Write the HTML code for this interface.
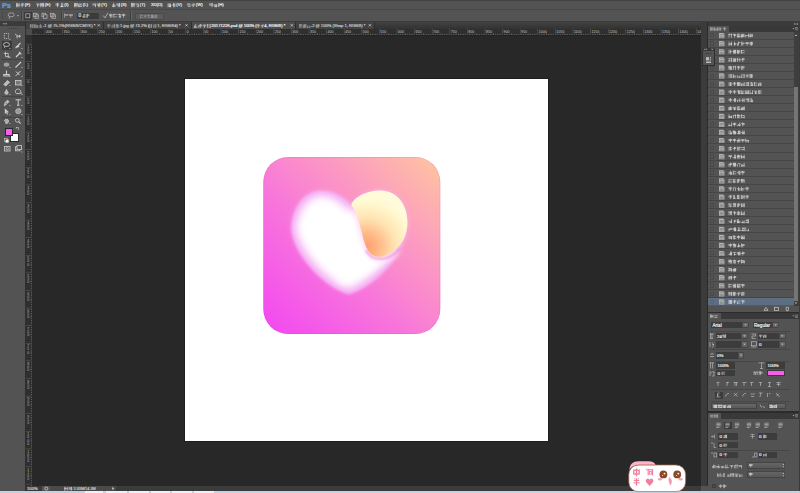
<!DOCTYPE html><html><head><meta charset="utf-8"><style>
html,body{margin:0;padding:0;}
body{width:800px;height:493px;overflow:hidden;position:relative;background:#282828;font-family:"Liberation Sans",sans-serif;}
div{position:absolute;box-sizing:border-box;}
.l{white-space:nowrap;line-height:1;-webkit-text-stroke:0.18px currentColor;}
svg{position:absolute;left:0;top:0;overflow:visible}
</style></head><body>
<div style="left:0px;top:0px;width:800px;height:10px;background:#535353;"></div>
<div style="left:0px;top:0px;width:800px;height:1px;background:#424242;"></div>
<div style="left:0px;top:9px;width:800px;height:1px;background:#484848;"></div>
<div class="l" style="left:2px;top:2.00px;font-size:7.6px;color:#58a2e2;font-weight:bold;letter-spacing:-0.2px">Ps</div>
<div class="l" style="left:24.8px;top:3.20px;font-size:4.3px;color:#f0f0f0;">(F)</div>
<div class="l" style="left:44.8px;top:3.20px;font-size:4.3px;color:#f0f0f0;">(E)</div>
<div class="l" style="left:64.3px;top:3.20px;font-size:4.3px;color:#f0f0f0;">(I)</div>
<div class="l" style="left:82.8px;top:3.20px;font-size:4.3px;color:#f0f0f0;">(L)</div>
<div class="l" style="left:101.3px;top:3.20px;font-size:4.3px;color:#f0f0f0;">(Y)</div>
<div class="l" style="left:120.8px;top:3.20px;font-size:4.3px;color:#f0f0f0;">(S)</div>
<div class="l" style="left:139.8px;top:3.20px;font-size:4.3px;color:#f0f0f0;">(T)</div>
<div class="l" style="left:176.3px;top:3.20px;font-size:4.3px;color:#f0f0f0;">(V)</div>
<div class="l" style="left:195.8px;top:3.20px;font-size:4.3px;color:#f0f0f0;">(W)</div>
<div class="l" style="left:217.8px;top:3.20px;font-size:4.3px;color:#f0f0f0;">(H)</div>
<div class="l" style="left:151px;top:3.20px;font-size:4.3px;color:#f0f0f0;">3D(D)</div>
<div style="left:0px;top:10px;width:800px;height:11.5px;background:#535353;"></div>
<div style="left:0px;top:21px;width:800px;height:1px;background:#3c3c3c;"></div>
<div style="left:2px;top:12px;width:1px;height:1px;background:#3e3e3e;"></div>
<div style="left:2px;top:14px;width:1px;height:1px;background:#3e3e3e;"></div>
<div style="left:2px;top:16px;width:1px;height:1px;background:#3e3e3e;"></div>
<div style="left:2px;top:18px;width:1px;height:1px;background:#3e3e3e;"></div>
<div style="left:21px;top:11px;width:1px;height:10px;background:#404040;"></div>
<div style="left:22px;top:11px;width:1px;height:10px;background:#626262;"></div>
<div style="left:24px;top:12px;width:7.5px;height:7.5px;background:#3a3a3a;"></div>
<div style="left:61px;top:11px;width:1px;height:10px;background:#404040;"></div>
<div style="left:62px;top:11px;width:1px;height:10px;background:#626262;"></div>
<div style="left:76.7px;top:13px;width:22.5px;height:6.2px;background:#3b3b3b;"></div>
<div class="l" style="left:78.5px;top:14.40px;font-size:4.6px;color:#e0e0e0;">0</div>
<div style="left:130px;top:11px;width:1px;height:10px;background:#404040;"></div>
<div style="left:131px;top:11px;width:1px;height:10px;background:#626262;"></div>
<div style="left:134.5px;top:13px;width:29.2px;height:6.5px;background:#5c5c5c;border:0.5px solid #4a4a4a"></div>
<svg width="800" height="30">
<g fill="none" stroke="#b4b4b4" stroke-width="0.75">
<ellipse cx="11.2" cy="14.8" rx="3" ry="2"/><path d="M9.5,16.6 C9,17.5 9.2,18.5 10,18.8"/>
<path d="M17,15.2 L19,15.2 L18,16.4 Z" fill="#cfcfcf" stroke="none"/>
<rect x="25.8" y="13.8" width="4" height="4"/>
<rect x="33.5" y="13.3" width="3.5" height="3.5"/><rect x="35" y="14.8" width="3.5" height="3.5"/>
<rect x="42" y="13.3" width="3.5" height="3.5"/><rect x="43.5" y="14.8" width="3.5" height="3.5" fill="#535353"/>
<rect x="50.5" y="13.3" width="3.5" height="3.5"/><rect x="52" y="14.8" width="3.5" height="3.5"/>
<path d="M103.2,15.6 L105,17.8 L108,12.8" stroke-width="0.9"/>
</g></svg>
<div style="left:0px;top:22px;width:25px;height:469px;background:#535353;"></div>
<div style="left:0px;top:22px;width:25px;height:3.6px;background:#3b3b3b;"></div>
<div style="left:25px;top:22px;width:1px;height:469px;background:#2e2e2e;"></div>
<div style="left:9px;top:28px;width:1.2px;height:0.9px;background:#3a3a3a;"></div>
<div style="left:11px;top:28px;width:1.2px;height:0.9px;background:#3a3a3a;"></div>
<div style="left:13px;top:28px;width:1.2px;height:0.9px;background:#3a3a3a;"></div>
<div style="left:15px;top:28px;width:1.2px;height:0.9px;background:#3a3a3a;"></div>
<div style="left:17px;top:28px;width:1.2px;height:0.9px;background:#3a3a3a;"></div>
<div style="left:1.5px;top:41px;width:10px;height:8.5px;background:#3a3a3a;"></div>
<div style="left:2px;top:58.8px;width:21px;height:0.8px;background:#444444;"></div>
<div style="left:2px;top:96px;width:21px;height:0.8px;background:#444444;"></div>
<div style="left:2px;top:116.5px;width:21px;height:0.8px;background:#444444;"></div>
<div style="left:4.9px;top:128.1px;width:8.2px;height:7.9px;background:#f55ee8;border:0.5px solid #2a2a2a"></div>
<div style="left:10px;top:133.3px;width:8.9px;height:8.5px;background:#ffffff;border:0.5px solid #2a2a2a"></div>
<div style="left:4.9px;top:128.1px;width:8.2px;height:7.9px;background:#f55ee8;border:0.5px solid #2a2a2a"></div>
<svg width="30" height="160">
<g fill="none" stroke="#cfcfcf" stroke-width="0.8">
<path d="M2.5,23.8 L4.5,22.8 L4.5,24.8 Z M4.8,23.8 L6.8,22.8 L6.8,24.8 Z" fill="#9a9a9a" stroke="none"/>
<rect x="4.3" y="33.5" width="4.3" height="5" stroke-dasharray="1 0.8"/>
<path d="M15,34 L18,36 L16.5,36.5 L17.5,38.5 M18,36.2 L21,36.2 M19.5,34.8 L19.5,37.6"/>
<ellipse cx="6.5" cy="44.5" rx="3" ry="2"/><path d="M4.8,46.2 C4.2,47 4.5,48 5.2,48.3"/>
<path d="M15.5,48 L20.5,43 M16,46.5 C17,47.5 18.5,47 19,46" stroke-width="1.1"/>
<path d="M5.5,51.8 L5.5,56.6 L9.6,56.6 M3.8,53.4 L8.2,53.4 L8.2,58"/>
<path d="M16,57 L20,53 M19,52 L21.3,54.3" stroke-width="1.2"/>
<ellipse cx="6.5" cy="64.6" rx="2.8" ry="2.2" fill="#9d9d9d" stroke="none"/>
<path d="M15.5,67.5 L21,62" stroke-width="1.1"/>
<path d="M6.5,70.5 L6.5,74 M3.8,74.5 L9.2,74.5 L9.2,76 L3.8,76 Z" stroke-width="1.1"/>
<path d="M15.5,76 L20.5,71 M16,71.5 L19.5,75" stroke-width="1"/>
<path d="M3.8,84.5 L7.5,80.5 L9.5,82.3 L5.8,86 Z" fill="#bbbbbb"/>
<rect x="15.5" y="80.5" width="5.5" height="4.5" fill="#777"/>
<path d="M6.5,88.8 L8.4,92.2 A2,2 0 1 1 4.6,92.2 Z" fill="#bbbbbb" stroke="none"/>
<path d="M15.6,92.6 A2.6,2.6 0 1 1 20.6,91.5 L21.4,93.2 L16.5,93.6 Z" stroke-width="0.9"/>
<path d="M4,106 L5,102.5 L7.5,100 L9.2,101.7 L6.7,104.2 Z" fill="#b8b8b8" stroke-width="0.5"/><circle cx="6.3" cy="103.3" r="0.5" fill="#535353" stroke="none"/>
<path d="M15.5,99.8 L21,99.8 M18.2,99.8 L18.2,105.2 M17,105.2 L19.4,105.2" stroke-width="1"/>
<path d="M4.8,108.3 L4.8,114.2 L6.2,112.8 L7.3,114.8 L8.2,114.3 L7.2,112.4 L9,112.2 Z" fill="#c8c8c8" stroke="none"/>
<path d="M15.8,110.2 C16.5,108.2 18.5,109.2 19.2,108.3 C20.5,108.6 21.5,110.8 20.8,112.2 C20,114 17,114.2 16.2,113 C15.6,112.2 15.6,111 15.8,110.2 Z" fill="#9a9a9a" stroke="#cfcfcf" stroke-width="0.6"/>
<path d="M4.5,121 C4.5,118.5 8.5,118.5 8.5,121 C8.5,123.5 6.5,124 5.2,123" fill="#aaaaaa"/>
<circle cx="17.3" cy="120.3" r="1.9"/><path d="M18.7,121.7 L20.6,123.6" stroke-width="1.1"/>
<path d="M16.4,127.5 L18.4,127.5 L18.4,130 M15.8,128.2 L16.6,127.3 L16.6,128.6" stroke-width="0.6"/>
<rect x="4.6" y="138.6" width="2.6" height="2.6" fill="#333" stroke-width="0.6"/><rect x="5.8" y="139.8" width="2.6" height="2.6" fill="#fff" stroke-width="0.6"/>
<rect x="4.5" y="146.5" width="5.5" height="4.5"/><circle cx="7.25" cy="148.75" r="1.2"/>
<rect x="15.5" y="146.8" width="4.5" height="4" /><rect x="17" y="145.6" width="4.5" height="4" fill="#535353"/>
</g>
<g fill="#d0d0d0">
<rect x="9.5" y="39" width="0.9" height="0.9"/><rect x="9.5" y="48" width="0.9" height="0.9"/><rect x="9.5" y="57" width="0.9" height="0.9"/>
<rect x="9.5" y="67" width="0.9" height="0.9"/><rect x="9.5" y="76" width="0.9" height="0.9"/><rect x="9.5" y="85" width="0.9" height="0.9"/><rect x="9.5" y="94" width="0.9" height="0.9"/>
<rect x="9.5" y="105" width="0.9" height="0.9"/><rect x="9.5" y="114" width="0.9" height="0.9"/><rect x="9.5" y="123" width="0.9" height="0.9"/>
<rect x="21.5" y="48" width="0.9" height="0.9"/><rect x="21.5" y="57" width="0.9" height="0.9"/><rect x="21.5" y="67" width="0.9" height="0.9"/>
<rect x="21.5" y="76" width="0.9" height="0.9"/><rect x="21.5" y="85" width="0.9" height="0.9"/><rect x="21.5" y="94" width="0.9" height="0.9"/>
<rect x="21.5" y="105" width="0.9" height="0.9"/><rect x="21.5" y="114" width="0.9" height="0.9"/><rect x="21.5" y="151.5" width="0.9" height="0.9"/>
</g></svg>
<div style="left:26px;top:22px;width:675px;height:6.6px;background:#393939;background:linear-gradient(#424242,#323232)"></div>
<div style="left:26px;top:22px;width:77px;height:6.6px;background:#424242;"></div>
<div style="left:103px;top:22px;width:0.8px;height:6.6px;background:#2e2e2e;"></div>
<div style="left:103.8px;top:22px;width:87px;height:6.6px;background:#424242;"></div>
<div style="left:190.8px;top:22px;width:0.8px;height:6.6px;background:#2e2e2e;"></div>
<div style="left:191.6px;top:22px;width:103.4px;height:6.6px;background:#4d4d4d;"></div>
<div style="left:295px;top:22px;width:0.8px;height:6.6px;background:#2e2e2e;"></div>
<div style="left:295.8px;top:22px;width:78px;height:6.6px;background:#424242;"></div>
<div style="left:373.8px;top:22px;width:0.8px;height:6.6px;background:#2e2e2e;"></div>
<div class="l" style="left:43px;top:24.00px;font-size:4.1px;color:#c8c8c8;">-1 @ 75.1%(RGB/8/CMYK) *</div>
<div class="l" style="left:120px;top:24.00px;font-size:4.1px;color:#c8c8c8;">1.jpg @ 73.2% (</div>
<div class="l" style="left:157.3px;top:24.00px;font-size:4.1px;color:#c8c8c8;"> 1, RGB/8#) *</div>
<div class="l" style="left:211.3px;top:24.00px;font-size:4.1px;color:#f4f4f4;">20171228.psd @ 100% (</div>
<div class="l" style="left:264.3px;top:24.00px;font-size:4.1px;color:#f4f4f4;"> 4, RGB/8) *</div>
<div class="l" style="left:310.8px;top:24.00px;font-size:4.1px;color:#c8c8c8;">-2 @ 100% (Shap 1, RGB/8) *</div>
<svg width="800" height="40"><g stroke="#d8d8d8" stroke-width="0.7"><path d="M97.7,24.2 L99.89999999999999,26.4 M99.89999999999999,24.2 L97.7,26.4"/><path d="M185.4,24.2 L187.6,26.4 M187.6,24.2 L185.4,26.4"/><path d="M290.7,24.2 L292.90000000000003,26.4 M292.90000000000003,24.2 L290.7,26.4"/><path d="M368.79999999999995,24.2 L371.0,26.4 M371.0,24.2 L368.79999999999995,26.4"/></g></svg>
<div style="left:26px;top:28.6px;width:675px;height:6.4px;background:#2f2f2f;"></div>
<div style="left:26px;top:28.6px;width:6px;height:457.4px;background:#2f2f2f;"></div>
<div style="left:26px;top:28.6px;width:6px;height:6.4px;background:#4d4d4d;"></div>
<div style="left:32px;top:34.5px;width:669px;height:0.5px;background:#222;"></div>
<svg width="800" height="493"><g fill="#8e8e8e"><rect x="32.38" y="34.10" width="0.5" height="0.9"/><rect x="34.14" y="34.10" width="0.5" height="0.9"/><rect x="35.90" y="33.40" width="0.5" height="1.6"/><rect x="37.66" y="34.10" width="0.5" height="0.9"/><rect x="39.42" y="34.10" width="0.5" height="0.9"/><rect x="41.18" y="34.10" width="0.5" height="0.9"/><rect x="42.94" y="34.10" width="0.5" height="0.9"/><rect x="44.70" y="28.6" width="0.6" height="6.4" fill="#5a5a5a"/><rect x="46.46" y="34.10" width="0.5" height="0.9"/><rect x="48.22" y="34.10" width="0.5" height="0.9"/><rect x="49.98" y="34.10" width="0.5" height="0.9"/><rect x="51.74" y="34.10" width="0.5" height="0.9"/><rect x="53.50" y="33.40" width="0.5" height="1.6"/><rect x="55.26" y="34.10" width="0.5" height="0.9"/><rect x="57.02" y="34.10" width="0.5" height="0.9"/><rect x="58.78" y="34.10" width="0.5" height="0.9"/><rect x="60.54" y="34.10" width="0.5" height="0.9"/><rect x="62.30" y="28.6" width="0.6" height="6.4" fill="#5a5a5a"/><rect x="64.06" y="34.10" width="0.5" height="0.9"/><rect x="65.82" y="34.10" width="0.5" height="0.9"/><rect x="67.58" y="34.10" width="0.5" height="0.9"/><rect x="69.34" y="34.10" width="0.5" height="0.9"/><rect x="71.10" y="33.40" width="0.5" height="1.6"/><rect x="72.86" y="34.10" width="0.5" height="0.9"/><rect x="74.62" y="34.10" width="0.5" height="0.9"/><rect x="76.38" y="34.10" width="0.5" height="0.9"/><rect x="78.14" y="34.10" width="0.5" height="0.9"/><rect x="79.90" y="28.6" width="0.6" height="6.4" fill="#5a5a5a"/><rect x="81.66" y="34.10" width="0.5" height="0.9"/><rect x="83.42" y="34.10" width="0.5" height="0.9"/><rect x="85.18" y="34.10" width="0.5" height="0.9"/><rect x="86.94" y="34.10" width="0.5" height="0.9"/><rect x="88.70" y="33.40" width="0.5" height="1.6"/><rect x="90.46" y="34.10" width="0.5" height="0.9"/><rect x="92.22" y="34.10" width="0.5" height="0.9"/><rect x="93.98" y="34.10" width="0.5" height="0.9"/><rect x="95.74" y="34.10" width="0.5" height="0.9"/><rect x="97.50" y="28.6" width="0.6" height="6.4" fill="#5a5a5a"/><rect x="99.26" y="34.10" width="0.5" height="0.9"/><rect x="101.02" y="34.10" width="0.5" height="0.9"/><rect x="102.78" y="34.10" width="0.5" height="0.9"/><rect x="104.54" y="34.10" width="0.5" height="0.9"/><rect x="106.30" y="33.40" width="0.5" height="1.6"/><rect x="108.06" y="34.10" width="0.5" height="0.9"/><rect x="109.82" y="34.10" width="0.5" height="0.9"/><rect x="111.58" y="34.10" width="0.5" height="0.9"/><rect x="113.34" y="34.10" width="0.5" height="0.9"/><rect x="115.10" y="28.6" width="0.6" height="6.4" fill="#5a5a5a"/><rect x="116.86" y="34.10" width="0.5" height="0.9"/><rect x="118.62" y="34.10" width="0.5" height="0.9"/><rect x="120.38" y="34.10" width="0.5" height="0.9"/><rect x="122.14" y="34.10" width="0.5" height="0.9"/><rect x="123.90" y="33.40" width="0.5" height="1.6"/><rect x="125.66" y="34.10" width="0.5" height="0.9"/><rect x="127.42" y="34.10" width="0.5" height="0.9"/><rect x="129.18" y="34.10" width="0.5" height="0.9"/><rect x="130.94" y="34.10" width="0.5" height="0.9"/><rect x="132.70" y="28.6" width="0.6" height="6.4" fill="#5a5a5a"/><rect x="134.46" y="34.10" width="0.5" height="0.9"/><rect x="136.22" y="34.10" width="0.5" height="0.9"/><rect x="137.98" y="34.10" width="0.5" height="0.9"/><rect x="139.74" y="34.10" width="0.5" height="0.9"/><rect x="141.50" y="33.40" width="0.5" height="1.6"/><rect x="143.26" y="34.10" width="0.5" height="0.9"/><rect x="145.02" y="34.10" width="0.5" height="0.9"/><rect x="146.78" y="34.10" width="0.5" height="0.9"/><rect x="148.54" y="34.10" width="0.5" height="0.9"/><rect x="150.30" y="28.6" width="0.6" height="6.4" fill="#5a5a5a"/><rect x="152.06" y="34.10" width="0.5" height="0.9"/><rect x="153.82" y="34.10" width="0.5" height="0.9"/><rect x="155.58" y="34.10" width="0.5" height="0.9"/><rect x="157.34" y="34.10" width="0.5" height="0.9"/><rect x="159.10" y="33.40" width="0.5" height="1.6"/><rect x="160.86" y="34.10" width="0.5" height="0.9"/><rect x="162.62" y="34.10" width="0.5" height="0.9"/><rect x="164.38" y="34.10" width="0.5" height="0.9"/><rect x="166.14" y="34.10" width="0.5" height="0.9"/><rect x="167.90" y="28.6" width="0.6" height="6.4" fill="#5a5a5a"/><rect x="169.66" y="34.10" width="0.5" height="0.9"/><rect x="171.42" y="34.10" width="0.5" height="0.9"/><rect x="173.18" y="34.10" width="0.5" height="0.9"/><rect x="174.94" y="34.10" width="0.5" height="0.9"/><rect x="176.70" y="33.40" width="0.5" height="1.6"/><rect x="178.46" y="34.10" width="0.5" height="0.9"/><rect x="180.22" y="34.10" width="0.5" height="0.9"/><rect x="181.98" y="34.10" width="0.5" height="0.9"/><rect x="183.74" y="34.10" width="0.5" height="0.9"/><rect x="185.50" y="28.6" width="0.6" height="6.4" fill="#5a5a5a"/><rect x="187.26" y="34.10" width="0.5" height="0.9"/><rect x="189.02" y="34.10" width="0.5" height="0.9"/><rect x="190.78" y="34.10" width="0.5" height="0.9"/><rect x="192.54" y="34.10" width="0.5" height="0.9"/><rect x="194.30" y="33.40" width="0.5" height="1.6"/><rect x="196.06" y="34.10" width="0.5" height="0.9"/><rect x="197.82" y="34.10" width="0.5" height="0.9"/><rect x="199.58" y="34.10" width="0.5" height="0.9"/><rect x="201.34" y="34.10" width="0.5" height="0.9"/><rect x="203.10" y="28.6" width="0.6" height="6.4" fill="#5a5a5a"/><rect x="204.86" y="34.10" width="0.5" height="0.9"/><rect x="206.62" y="34.10" width="0.5" height="0.9"/><rect x="208.38" y="34.10" width="0.5" height="0.9"/><rect x="210.14" y="34.10" width="0.5" height="0.9"/><rect x="211.90" y="33.40" width="0.5" height="1.6"/><rect x="213.66" y="34.10" width="0.5" height="0.9"/><rect x="215.42" y="34.10" width="0.5" height="0.9"/><rect x="217.18" y="34.10" width="0.5" height="0.9"/><rect x="218.94" y="34.10" width="0.5" height="0.9"/><rect x="220.70" y="28.6" width="0.6" height="6.4" fill="#5a5a5a"/><rect x="222.46" y="34.10" width="0.5" height="0.9"/><rect x="224.22" y="34.10" width="0.5" height="0.9"/><rect x="225.98" y="34.10" width="0.5" height="0.9"/><rect x="227.74" y="34.10" width="0.5" height="0.9"/><rect x="229.50" y="33.40" width="0.5" height="1.6"/><rect x="231.26" y="34.10" width="0.5" height="0.9"/><rect x="233.02" y="34.10" width="0.5" height="0.9"/><rect x="234.78" y="34.10" width="0.5" height="0.9"/><rect x="236.54" y="34.10" width="0.5" height="0.9"/><rect x="238.30" y="28.6" width="0.6" height="6.4" fill="#5a5a5a"/><rect x="240.06" y="34.10" width="0.5" height="0.9"/><rect x="241.82" y="34.10" width="0.5" height="0.9"/><rect x="243.58" y="34.10" width="0.5" height="0.9"/><rect x="245.34" y="34.10" width="0.5" height="0.9"/><rect x="247.10" y="33.40" width="0.5" height="1.6"/><rect x="248.86" y="34.10" width="0.5" height="0.9"/><rect x="250.62" y="34.10" width="0.5" height="0.9"/><rect x="252.38" y="34.10" width="0.5" height="0.9"/><rect x="254.14" y="34.10" width="0.5" height="0.9"/><rect x="255.90" y="28.6" width="0.6" height="6.4" fill="#5a5a5a"/><rect x="257.66" y="34.10" width="0.5" height="0.9"/><rect x="259.42" y="34.10" width="0.5" height="0.9"/><rect x="261.18" y="34.10" width="0.5" height="0.9"/><rect x="262.94" y="34.10" width="0.5" height="0.9"/><rect x="264.70" y="33.40" width="0.5" height="1.6"/><rect x="266.46" y="34.10" width="0.5" height="0.9"/><rect x="268.22" y="34.10" width="0.5" height="0.9"/><rect x="269.98" y="34.10" width="0.5" height="0.9"/><rect x="271.74" y="34.10" width="0.5" height="0.9"/><rect x="273.50" y="28.6" width="0.6" height="6.4" fill="#5a5a5a"/><rect x="275.26" y="34.10" width="0.5" height="0.9"/><rect x="277.02" y="34.10" width="0.5" height="0.9"/><rect x="278.78" y="34.10" width="0.5" height="0.9"/><rect x="280.54" y="34.10" width="0.5" height="0.9"/><rect x="282.30" y="33.40" width="0.5" height="1.6"/><rect x="284.06" y="34.10" width="0.5" height="0.9"/><rect x="285.82" y="34.10" width="0.5" height="0.9"/><rect x="287.58" y="34.10" width="0.5" height="0.9"/><rect x="289.34" y="34.10" width="0.5" height="0.9"/><rect x="291.10" y="28.6" width="0.6" height="6.4" fill="#5a5a5a"/><rect x="292.86" y="34.10" width="0.5" height="0.9"/><rect x="294.62" y="34.10" width="0.5" height="0.9"/><rect x="296.38" y="34.10" width="0.5" height="0.9"/><rect x="298.14" y="34.10" width="0.5" height="0.9"/><rect x="299.90" y="33.40" width="0.5" height="1.6"/><rect x="301.66" y="34.10" width="0.5" height="0.9"/><rect x="303.42" y="34.10" width="0.5" height="0.9"/><rect x="305.18" y="34.10" width="0.5" height="0.9"/><rect x="306.94" y="34.10" width="0.5" height="0.9"/><rect x="308.70" y="28.6" width="0.6" height="6.4" fill="#5a5a5a"/><rect x="310.46" y="34.10" width="0.5" height="0.9"/><rect x="312.22" y="34.10" width="0.5" height="0.9"/><rect x="313.98" y="34.10" width="0.5" height="0.9"/><rect x="315.74" y="34.10" width="0.5" height="0.9"/><rect x="317.50" y="33.40" width="0.5" height="1.6"/><rect x="319.26" y="34.10" width="0.5" height="0.9"/><rect x="321.02" y="34.10" width="0.5" height="0.9"/><rect x="322.78" y="34.10" width="0.5" height="0.9"/><rect x="324.54" y="34.10" width="0.5" height="0.9"/><rect x="326.30" y="28.6" width="0.6" height="6.4" fill="#5a5a5a"/><rect x="328.06" y="34.10" width="0.5" height="0.9"/><rect x="329.82" y="34.10" width="0.5" height="0.9"/><rect x="331.58" y="34.10" width="0.5" height="0.9"/><rect x="333.34" y="34.10" width="0.5" height="0.9"/><rect x="335.10" y="33.40" width="0.5" height="1.6"/><rect x="336.86" y="34.10" width="0.5" height="0.9"/><rect x="338.62" y="34.10" width="0.5" height="0.9"/><rect x="340.38" y="34.10" width="0.5" height="0.9"/><rect x="342.14" y="34.10" width="0.5" height="0.9"/><rect x="343.90" y="28.6" width="0.6" height="6.4" fill="#5a5a5a"/><rect x="345.66" y="34.10" width="0.5" height="0.9"/><rect x="347.42" y="34.10" width="0.5" height="0.9"/><rect x="349.18" y="34.10" width="0.5" height="0.9"/><rect x="350.94" y="34.10" width="0.5" height="0.9"/><rect x="352.70" y="33.40" width="0.5" height="1.6"/><rect x="354.46" y="34.10" width="0.5" height="0.9"/><rect x="356.22" y="34.10" width="0.5" height="0.9"/><rect x="357.98" y="34.10" width="0.5" height="0.9"/><rect x="359.74" y="34.10" width="0.5" height="0.9"/><rect x="361.50" y="28.6" width="0.6" height="6.4" fill="#5a5a5a"/><rect x="363.26" y="34.10" width="0.5" height="0.9"/><rect x="365.02" y="34.10" width="0.5" height="0.9"/><rect x="366.78" y="34.10" width="0.5" height="0.9"/><rect x="368.54" y="34.10" width="0.5" height="0.9"/><rect x="370.30" y="33.40" width="0.5" height="1.6"/><rect x="372.06" y="34.10" width="0.5" height="0.9"/><rect x="373.82" y="34.10" width="0.5" height="0.9"/><rect x="375.58" y="34.10" width="0.5" height="0.9"/><rect x="377.34" y="34.10" width="0.5" height="0.9"/><rect x="379.10" y="28.6" width="0.6" height="6.4" fill="#5a5a5a"/><rect x="380.86" y="34.10" width="0.5" height="0.9"/><rect x="382.62" y="34.10" width="0.5" height="0.9"/><rect x="384.38" y="34.10" width="0.5" height="0.9"/><rect x="386.14" y="34.10" width="0.5" height="0.9"/><rect x="387.90" y="33.40" width="0.5" height="1.6"/><rect x="389.66" y="34.10" width="0.5" height="0.9"/><rect x="391.42" y="34.10" width="0.5" height="0.9"/><rect x="393.18" y="34.10" width="0.5" height="0.9"/><rect x="394.94" y="34.10" width="0.5" height="0.9"/><rect x="396.70" y="28.6" width="0.6" height="6.4" fill="#5a5a5a"/><rect x="398.46" y="34.10" width="0.5" height="0.9"/><rect x="400.22" y="34.10" width="0.5" height="0.9"/><rect x="401.98" y="34.10" width="0.5" height="0.9"/><rect x="403.74" y="34.10" width="0.5" height="0.9"/><rect x="405.50" y="33.40" width="0.5" height="1.6"/><rect x="407.26" y="34.10" width="0.5" height="0.9"/><rect x="409.02" y="34.10" width="0.5" height="0.9"/><rect x="410.78" y="34.10" width="0.5" height="0.9"/><rect x="412.54" y="34.10" width="0.5" height="0.9"/><rect x="414.30" y="28.6" width="0.6" height="6.4" fill="#5a5a5a"/><rect x="416.06" y="34.10" width="0.5" height="0.9"/><rect x="417.82" y="34.10" width="0.5" height="0.9"/><rect x="419.58" y="34.10" width="0.5" height="0.9"/><rect x="421.34" y="34.10" width="0.5" height="0.9"/><rect x="423.10" y="33.40" width="0.5" height="1.6"/><rect x="424.86" y="34.10" width="0.5" height="0.9"/><rect x="426.62" y="34.10" width="0.5" height="0.9"/><rect x="428.38" y="34.10" width="0.5" height="0.9"/><rect x="430.14" y="34.10" width="0.5" height="0.9"/><rect x="431.90" y="28.6" width="0.6" height="6.4" fill="#5a5a5a"/><rect x="433.66" y="34.10" width="0.5" height="0.9"/><rect x="435.42" y="34.10" width="0.5" height="0.9"/><rect x="437.18" y="34.10" width="0.5" height="0.9"/><rect x="438.94" y="34.10" width="0.5" height="0.9"/><rect x="440.70" y="33.40" width="0.5" height="1.6"/><rect x="442.46" y="34.10" width="0.5" height="0.9"/><rect x="444.22" y="34.10" width="0.5" height="0.9"/><rect x="445.98" y="34.10" width="0.5" height="0.9"/><rect x="447.74" y="34.10" width="0.5" height="0.9"/><rect x="449.50" y="28.6" width="0.6" height="6.4" fill="#5a5a5a"/><rect x="451.26" y="34.10" width="0.5" height="0.9"/><rect x="453.02" y="34.10" width="0.5" height="0.9"/><rect x="454.78" y="34.10" width="0.5" height="0.9"/><rect x="456.54" y="34.10" width="0.5" height="0.9"/><rect x="458.30" y="33.40" width="0.5" height="1.6"/><rect x="460.06" y="34.10" width="0.5" height="0.9"/><rect x="461.82" y="34.10" width="0.5" height="0.9"/><rect x="463.58" y="34.10" width="0.5" height="0.9"/><rect x="465.34" y="34.10" width="0.5" height="0.9"/><rect x="467.10" y="28.6" width="0.6" height="6.4" fill="#5a5a5a"/><rect x="468.86" y="34.10" width="0.5" height="0.9"/><rect x="470.62" y="34.10" width="0.5" height="0.9"/><rect x="472.38" y="34.10" width="0.5" height="0.9"/><rect x="474.14" y="34.10" width="0.5" height="0.9"/><rect x="475.90" y="33.40" width="0.5" height="1.6"/><rect x="477.66" y="34.10" width="0.5" height="0.9"/><rect x="479.42" y="34.10" width="0.5" height="0.9"/><rect x="481.18" y="34.10" width="0.5" height="0.9"/><rect x="482.94" y="34.10" width="0.5" height="0.9"/><rect x="484.70" y="28.6" width="0.6" height="6.4" fill="#5a5a5a"/><rect x="486.46" y="34.10" width="0.5" height="0.9"/><rect x="488.22" y="34.10" width="0.5" height="0.9"/><rect x="489.98" y="34.10" width="0.5" height="0.9"/><rect x="491.74" y="34.10" width="0.5" height="0.9"/><rect x="493.50" y="33.40" width="0.5" height="1.6"/><rect x="495.26" y="34.10" width="0.5" height="0.9"/><rect x="497.02" y="34.10" width="0.5" height="0.9"/><rect x="498.78" y="34.10" width="0.5" height="0.9"/><rect x="500.54" y="34.10" width="0.5" height="0.9"/><rect x="502.30" y="28.6" width="0.6" height="6.4" fill="#5a5a5a"/><rect x="504.06" y="34.10" width="0.5" height="0.9"/><rect x="505.82" y="34.10" width="0.5" height="0.9"/><rect x="507.58" y="34.10" width="0.5" height="0.9"/><rect x="509.34" y="34.10" width="0.5" height="0.9"/><rect x="511.10" y="33.40" width="0.5" height="1.6"/><rect x="512.86" y="34.10" width="0.5" height="0.9"/><rect x="514.62" y="34.10" width="0.5" height="0.9"/><rect x="516.38" y="34.10" width="0.5" height="0.9"/><rect x="518.14" y="34.10" width="0.5" height="0.9"/><rect x="519.90" y="28.6" width="0.6" height="6.4" fill="#5a5a5a"/><rect x="521.66" y="34.10" width="0.5" height="0.9"/><rect x="523.42" y="34.10" width="0.5" height="0.9"/><rect x="525.18" y="34.10" width="0.5" height="0.9"/><rect x="526.94" y="34.10" width="0.5" height="0.9"/><rect x="528.70" y="33.40" width="0.5" height="1.6"/><rect x="530.46" y="34.10" width="0.5" height="0.9"/><rect x="532.22" y="34.10" width="0.5" height="0.9"/><rect x="533.98" y="34.10" width="0.5" height="0.9"/><rect x="535.74" y="34.10" width="0.5" height="0.9"/><rect x="537.50" y="28.6" width="0.6" height="6.4" fill="#5a5a5a"/><rect x="539.26" y="34.10" width="0.5" height="0.9"/><rect x="541.02" y="34.10" width="0.5" height="0.9"/><rect x="542.78" y="34.10" width="0.5" height="0.9"/><rect x="544.54" y="34.10" width="0.5" height="0.9"/><rect x="546.30" y="33.40" width="0.5" height="1.6"/><rect x="548.06" y="34.10" width="0.5" height="0.9"/><rect x="549.82" y="34.10" width="0.5" height="0.9"/><rect x="551.58" y="34.10" width="0.5" height="0.9"/><rect x="553.34" y="34.10" width="0.5" height="0.9"/><rect x="555.10" y="28.6" width="0.6" height="6.4" fill="#5a5a5a"/><rect x="556.86" y="34.10" width="0.5" height="0.9"/><rect x="558.62" y="34.10" width="0.5" height="0.9"/><rect x="560.38" y="34.10" width="0.5" height="0.9"/><rect x="562.14" y="34.10" width="0.5" height="0.9"/><rect x="563.90" y="33.40" width="0.5" height="1.6"/><rect x="565.66" y="34.10" width="0.5" height="0.9"/><rect x="567.42" y="34.10" width="0.5" height="0.9"/><rect x="569.18" y="34.10" width="0.5" height="0.9"/><rect x="570.94" y="34.10" width="0.5" height="0.9"/><rect x="572.70" y="28.6" width="0.6" height="6.4" fill="#5a5a5a"/><rect x="574.46" y="34.10" width="0.5" height="0.9"/><rect x="576.22" y="34.10" width="0.5" height="0.9"/><rect x="577.98" y="34.10" width="0.5" height="0.9"/><rect x="579.74" y="34.10" width="0.5" height="0.9"/><rect x="581.50" y="33.40" width="0.5" height="1.6"/><rect x="583.26" y="34.10" width="0.5" height="0.9"/><rect x="585.02" y="34.10" width="0.5" height="0.9"/><rect x="586.78" y="34.10" width="0.5" height="0.9"/><rect x="588.54" y="34.10" width="0.5" height="0.9"/><rect x="590.30" y="28.6" width="0.6" height="6.4" fill="#5a5a5a"/><rect x="592.06" y="34.10" width="0.5" height="0.9"/><rect x="593.82" y="34.10" width="0.5" height="0.9"/><rect x="595.58" y="34.10" width="0.5" height="0.9"/><rect x="597.34" y="34.10" width="0.5" height="0.9"/><rect x="599.10" y="33.40" width="0.5" height="1.6"/><rect x="600.86" y="34.10" width="0.5" height="0.9"/><rect x="602.62" y="34.10" width="0.5" height="0.9"/><rect x="604.38" y="34.10" width="0.5" height="0.9"/><rect x="606.14" y="34.10" width="0.5" height="0.9"/><rect x="607.90" y="28.6" width="0.6" height="6.4" fill="#5a5a5a"/><rect x="609.66" y="34.10" width="0.5" height="0.9"/><rect x="611.42" y="34.10" width="0.5" height="0.9"/><rect x="613.18" y="34.10" width="0.5" height="0.9"/><rect x="614.94" y="34.10" width="0.5" height="0.9"/><rect x="616.70" y="33.40" width="0.5" height="1.6"/><rect x="618.46" y="34.10" width="0.5" height="0.9"/><rect x="620.22" y="34.10" width="0.5" height="0.9"/><rect x="621.98" y="34.10" width="0.5" height="0.9"/><rect x="623.74" y="34.10" width="0.5" height="0.9"/><rect x="625.50" y="28.6" width="0.6" height="6.4" fill="#5a5a5a"/><rect x="627.26" y="34.10" width="0.5" height="0.9"/><rect x="629.02" y="34.10" width="0.5" height="0.9"/><rect x="630.78" y="34.10" width="0.5" height="0.9"/><rect x="632.54" y="34.10" width="0.5" height="0.9"/><rect x="634.30" y="33.40" width="0.5" height="1.6"/><rect x="636.06" y="34.10" width="0.5" height="0.9"/><rect x="637.82" y="34.10" width="0.5" height="0.9"/><rect x="639.58" y="34.10" width="0.5" height="0.9"/><rect x="641.34" y="34.10" width="0.5" height="0.9"/><rect x="643.10" y="28.6" width="0.6" height="6.4" fill="#5a5a5a"/><rect x="644.86" y="34.10" width="0.5" height="0.9"/><rect x="646.62" y="34.10" width="0.5" height="0.9"/><rect x="648.38" y="34.10" width="0.5" height="0.9"/><rect x="650.14" y="34.10" width="0.5" height="0.9"/><rect x="651.90" y="33.40" width="0.5" height="1.6"/><rect x="653.66" y="34.10" width="0.5" height="0.9"/><rect x="655.42" y="34.10" width="0.5" height="0.9"/><rect x="657.18" y="34.10" width="0.5" height="0.9"/><rect x="658.94" y="34.10" width="0.5" height="0.9"/><rect x="660.70" y="28.6" width="0.6" height="6.4" fill="#5a5a5a"/><rect x="662.46" y="34.10" width="0.5" height="0.9"/><rect x="664.22" y="34.10" width="0.5" height="0.9"/><rect x="665.98" y="34.10" width="0.5" height="0.9"/><rect x="667.74" y="34.10" width="0.5" height="0.9"/><rect x="669.50" y="33.40" width="0.5" height="1.6"/><rect x="671.26" y="34.10" width="0.5" height="0.9"/><rect x="673.02" y="34.10" width="0.5" height="0.9"/><rect x="674.78" y="34.10" width="0.5" height="0.9"/><rect x="676.54" y="34.10" width="0.5" height="0.9"/><rect x="678.30" y="28.6" width="0.6" height="6.4" fill="#5a5a5a"/><rect x="680.06" y="34.10" width="0.5" height="0.9"/><rect x="681.82" y="34.10" width="0.5" height="0.9"/><rect x="683.58" y="34.10" width="0.5" height="0.9"/><rect x="685.34" y="34.10" width="0.5" height="0.9"/><rect x="687.10" y="33.40" width="0.5" height="1.6"/><rect x="688.86" y="34.10" width="0.5" height="0.9"/><rect x="690.62" y="34.10" width="0.5" height="0.9"/><rect x="692.38" y="34.10" width="0.5" height="0.9"/><rect x="694.14" y="34.10" width="0.5" height="0.9"/><rect x="695.90" y="28.6" width="0.6" height="6.4" fill="#5a5a5a"/><rect x="697.66" y="34.10" width="0.5" height="0.9"/><rect x="699.42" y="34.10" width="0.5" height="0.9"/><rect x="26" y="43.80" width="6" height="0.6" fill="#5a5a5a"/><rect x="31.10" y="45.56" width="0.9" height="0.5"/><rect x="31.10" y="47.32" width="0.9" height="0.5"/><rect x="31.10" y="49.08" width="0.9" height="0.5"/><rect x="31.10" y="50.84" width="0.9" height="0.5"/><rect x="30.40" y="52.60" width="1.6" height="0.5"/><rect x="31.10" y="54.36" width="0.9" height="0.5"/><rect x="31.10" y="56.12" width="0.9" height="0.5"/><rect x="31.10" y="57.88" width="0.9" height="0.5"/><rect x="31.10" y="59.64" width="0.9" height="0.5"/><rect x="26" y="61.40" width="6" height="0.6" fill="#5a5a5a"/><rect x="31.10" y="63.16" width="0.9" height="0.5"/><rect x="31.10" y="64.92" width="0.9" height="0.5"/><rect x="31.10" y="66.68" width="0.9" height="0.5"/><rect x="31.10" y="68.44" width="0.9" height="0.5"/><rect x="30.40" y="70.20" width="1.6" height="0.5"/><rect x="31.10" y="71.96" width="0.9" height="0.5"/><rect x="31.10" y="73.72" width="0.9" height="0.5"/><rect x="31.10" y="75.48" width="0.9" height="0.5"/><rect x="31.10" y="77.24" width="0.9" height="0.5"/><rect x="26" y="79.00" width="6" height="0.6" fill="#5a5a5a"/><rect x="31.10" y="80.76" width="0.9" height="0.5"/><rect x="31.10" y="82.52" width="0.9" height="0.5"/><rect x="31.10" y="84.28" width="0.9" height="0.5"/><rect x="31.10" y="86.04" width="0.9" height="0.5"/><rect x="30.40" y="87.80" width="1.6" height="0.5"/><rect x="31.10" y="89.56" width="0.9" height="0.5"/><rect x="31.10" y="91.32" width="0.9" height="0.5"/><rect x="31.10" y="93.08" width="0.9" height="0.5"/><rect x="31.10" y="94.84" width="0.9" height="0.5"/><rect x="26" y="96.60" width="6" height="0.6" fill="#5a5a5a"/><rect x="31.10" y="98.36" width="0.9" height="0.5"/><rect x="31.10" y="100.12" width="0.9" height="0.5"/><rect x="31.10" y="101.88" width="0.9" height="0.5"/><rect x="31.10" y="103.64" width="0.9" height="0.5"/><rect x="30.40" y="105.40" width="1.6" height="0.5"/><rect x="31.10" y="107.16" width="0.9" height="0.5"/><rect x="31.10" y="108.92" width="0.9" height="0.5"/><rect x="31.10" y="110.68" width="0.9" height="0.5"/><rect x="31.10" y="112.44" width="0.9" height="0.5"/><rect x="26" y="114.20" width="6" height="0.6" fill="#5a5a5a"/><rect x="31.10" y="115.96" width="0.9" height="0.5"/><rect x="31.10" y="117.72" width="0.9" height="0.5"/><rect x="31.10" y="119.48" width="0.9" height="0.5"/><rect x="31.10" y="121.24" width="0.9" height="0.5"/><rect x="30.40" y="123.00" width="1.6" height="0.5"/><rect x="31.10" y="124.76" width="0.9" height="0.5"/><rect x="31.10" y="126.52" width="0.9" height="0.5"/><rect x="31.10" y="128.28" width="0.9" height="0.5"/><rect x="31.10" y="130.04" width="0.9" height="0.5"/><rect x="26" y="131.80" width="6" height="0.6" fill="#5a5a5a"/><rect x="31.10" y="133.56" width="0.9" height="0.5"/><rect x="31.10" y="135.32" width="0.9" height="0.5"/><rect x="31.10" y="137.08" width="0.9" height="0.5"/><rect x="31.10" y="138.84" width="0.9" height="0.5"/><rect x="30.40" y="140.60" width="1.6" height="0.5"/><rect x="31.10" y="142.36" width="0.9" height="0.5"/><rect x="31.10" y="144.12" width="0.9" height="0.5"/><rect x="31.10" y="145.88" width="0.9" height="0.5"/><rect x="31.10" y="147.64" width="0.9" height="0.5"/><rect x="26" y="149.40" width="6" height="0.6" fill="#5a5a5a"/><rect x="31.10" y="151.16" width="0.9" height="0.5"/><rect x="31.10" y="152.92" width="0.9" height="0.5"/><rect x="31.10" y="154.68" width="0.9" height="0.5"/><rect x="31.10" y="156.44" width="0.9" height="0.5"/><rect x="30.40" y="158.20" width="1.6" height="0.5"/><rect x="31.10" y="159.96" width="0.9" height="0.5"/><rect x="31.10" y="161.72" width="0.9" height="0.5"/><rect x="31.10" y="163.48" width="0.9" height="0.5"/><rect x="31.10" y="165.24" width="0.9" height="0.5"/><rect x="26" y="167.00" width="6" height="0.6" fill="#5a5a5a"/><rect x="31.10" y="168.76" width="0.9" height="0.5"/><rect x="31.10" y="170.52" width="0.9" height="0.5"/><rect x="31.10" y="172.28" width="0.9" height="0.5"/><rect x="31.10" y="174.04" width="0.9" height="0.5"/><rect x="30.40" y="175.80" width="1.6" height="0.5"/><rect x="31.10" y="177.56" width="0.9" height="0.5"/><rect x="31.10" y="179.32" width="0.9" height="0.5"/><rect x="31.10" y="181.08" width="0.9" height="0.5"/><rect x="31.10" y="182.84" width="0.9" height="0.5"/><rect x="26" y="184.60" width="6" height="0.6" fill="#5a5a5a"/><rect x="31.10" y="186.36" width="0.9" height="0.5"/><rect x="31.10" y="188.12" width="0.9" height="0.5"/><rect x="31.10" y="189.88" width="0.9" height="0.5"/><rect x="31.10" y="191.64" width="0.9" height="0.5"/><rect x="30.40" y="193.40" width="1.6" height="0.5"/><rect x="31.10" y="195.16" width="0.9" height="0.5"/><rect x="31.10" y="196.92" width="0.9" height="0.5"/><rect x="31.10" y="198.68" width="0.9" height="0.5"/><rect x="31.10" y="200.44" width="0.9" height="0.5"/><rect x="26" y="202.20" width="6" height="0.6" fill="#5a5a5a"/><rect x="31.10" y="203.96" width="0.9" height="0.5"/><rect x="31.10" y="205.72" width="0.9" height="0.5"/><rect x="31.10" y="207.48" width="0.9" height="0.5"/><rect x="31.10" y="209.24" width="0.9" height="0.5"/><rect x="30.40" y="211.00" width="1.6" height="0.5"/><rect x="31.10" y="212.76" width="0.9" height="0.5"/><rect x="31.10" y="214.52" width="0.9" height="0.5"/><rect x="31.10" y="216.28" width="0.9" height="0.5"/><rect x="31.10" y="218.04" width="0.9" height="0.5"/><rect x="26" y="219.80" width="6" height="0.6" fill="#5a5a5a"/><rect x="31.10" y="221.56" width="0.9" height="0.5"/><rect x="31.10" y="223.32" width="0.9" height="0.5"/><rect x="31.10" y="225.08" width="0.9" height="0.5"/><rect x="31.10" y="226.84" width="0.9" height="0.5"/><rect x="30.40" y="228.60" width="1.6" height="0.5"/><rect x="31.10" y="230.36" width="0.9" height="0.5"/><rect x="31.10" y="232.12" width="0.9" height="0.5"/><rect x="31.10" y="233.88" width="0.9" height="0.5"/><rect x="31.10" y="235.64" width="0.9" height="0.5"/><rect x="26" y="237.40" width="6" height="0.6" fill="#5a5a5a"/><rect x="31.10" y="239.16" width="0.9" height="0.5"/><rect x="31.10" y="240.92" width="0.9" height="0.5"/><rect x="31.10" y="242.68" width="0.9" height="0.5"/><rect x="31.10" y="244.44" width="0.9" height="0.5"/><rect x="30.40" y="246.20" width="1.6" height="0.5"/><rect x="31.10" y="247.96" width="0.9" height="0.5"/><rect x="31.10" y="249.72" width="0.9" height="0.5"/><rect x="31.10" y="251.48" width="0.9" height="0.5"/><rect x="31.10" y="253.24" width="0.9" height="0.5"/><rect x="26" y="255.00" width="6" height="0.6" fill="#5a5a5a"/><rect x="31.10" y="256.76" width="0.9" height="0.5"/><rect x="31.10" y="258.52" width="0.9" height="0.5"/><rect x="31.10" y="260.28" width="0.9" height="0.5"/><rect x="31.10" y="262.04" width="0.9" height="0.5"/><rect x="30.40" y="263.80" width="1.6" height="0.5"/><rect x="31.10" y="265.56" width="0.9" height="0.5"/><rect x="31.10" y="267.32" width="0.9" height="0.5"/><rect x="31.10" y="269.08" width="0.9" height="0.5"/><rect x="31.10" y="270.84" width="0.9" height="0.5"/><rect x="26" y="272.60" width="6" height="0.6" fill="#5a5a5a"/><rect x="31.10" y="274.36" width="0.9" height="0.5"/><rect x="31.10" y="276.12" width="0.9" height="0.5"/><rect x="31.10" y="277.88" width="0.9" height="0.5"/><rect x="31.10" y="279.64" width="0.9" height="0.5"/><rect x="30.40" y="281.40" width="1.6" height="0.5"/><rect x="31.10" y="283.16" width="0.9" height="0.5"/><rect x="31.10" y="284.92" width="0.9" height="0.5"/><rect x="31.10" y="286.68" width="0.9" height="0.5"/><rect x="31.10" y="288.44" width="0.9" height="0.5"/><rect x="26" y="290.20" width="6" height="0.6" fill="#5a5a5a"/><rect x="31.10" y="291.96" width="0.9" height="0.5"/><rect x="31.10" y="293.72" width="0.9" height="0.5"/><rect x="31.10" y="295.48" width="0.9" height="0.5"/><rect x="31.10" y="297.24" width="0.9" height="0.5"/><rect x="30.40" y="299.00" width="1.6" height="0.5"/><rect x="31.10" y="300.76" width="0.9" height="0.5"/><rect x="31.10" y="302.52" width="0.9" height="0.5"/><rect x="31.10" y="304.28" width="0.9" height="0.5"/><rect x="31.10" y="306.04" width="0.9" height="0.5"/><rect x="26" y="307.80" width="6" height="0.6" fill="#5a5a5a"/><rect x="31.10" y="309.56" width="0.9" height="0.5"/><rect x="31.10" y="311.32" width="0.9" height="0.5"/><rect x="31.10" y="313.08" width="0.9" height="0.5"/><rect x="31.10" y="314.84" width="0.9" height="0.5"/><rect x="30.40" y="316.60" width="1.6" height="0.5"/><rect x="31.10" y="318.36" width="0.9" height="0.5"/><rect x="31.10" y="320.12" width="0.9" height="0.5"/><rect x="31.10" y="321.88" width="0.9" height="0.5"/><rect x="31.10" y="323.64" width="0.9" height="0.5"/><rect x="26" y="325.40" width="6" height="0.6" fill="#5a5a5a"/><rect x="31.10" y="327.16" width="0.9" height="0.5"/><rect x="31.10" y="328.92" width="0.9" height="0.5"/><rect x="31.10" y="330.68" width="0.9" height="0.5"/><rect x="31.10" y="332.44" width="0.9" height="0.5"/><rect x="30.40" y="334.20" width="1.6" height="0.5"/><rect x="31.10" y="335.96" width="0.9" height="0.5"/><rect x="31.10" y="337.72" width="0.9" height="0.5"/><rect x="31.10" y="339.48" width="0.9" height="0.5"/><rect x="31.10" y="341.24" width="0.9" height="0.5"/><rect x="26" y="343.00" width="6" height="0.6" fill="#5a5a5a"/><rect x="31.10" y="344.76" width="0.9" height="0.5"/><rect x="31.10" y="346.52" width="0.9" height="0.5"/><rect x="31.10" y="348.28" width="0.9" height="0.5"/><rect x="31.10" y="350.04" width="0.9" height="0.5"/><rect x="30.40" y="351.80" width="1.6" height="0.5"/><rect x="31.10" y="353.56" width="0.9" height="0.5"/><rect x="31.10" y="355.32" width="0.9" height="0.5"/><rect x="31.10" y="357.08" width="0.9" height="0.5"/><rect x="31.10" y="358.84" width="0.9" height="0.5"/><rect x="26" y="360.60" width="6" height="0.6" fill="#5a5a5a"/><rect x="31.10" y="362.36" width="0.9" height="0.5"/><rect x="31.10" y="364.12" width="0.9" height="0.5"/><rect x="31.10" y="365.88" width="0.9" height="0.5"/><rect x="31.10" y="367.64" width="0.9" height="0.5"/><rect x="30.40" y="369.40" width="1.6" height="0.5"/><rect x="31.10" y="371.16" width="0.9" height="0.5"/><rect x="31.10" y="372.92" width="0.9" height="0.5"/><rect x="31.10" y="374.68" width="0.9" height="0.5"/><rect x="31.10" y="376.44" width="0.9" height="0.5"/><rect x="26" y="378.20" width="6" height="0.6" fill="#5a5a5a"/><rect x="31.10" y="379.96" width="0.9" height="0.5"/><rect x="31.10" y="381.72" width="0.9" height="0.5"/><rect x="31.10" y="383.48" width="0.9" height="0.5"/><rect x="31.10" y="385.24" width="0.9" height="0.5"/><rect x="30.40" y="387.00" width="1.6" height="0.5"/><rect x="31.10" y="388.76" width="0.9" height="0.5"/><rect x="31.10" y="390.52" width="0.9" height="0.5"/><rect x="31.10" y="392.28" width="0.9" height="0.5"/><rect x="31.10" y="394.04" width="0.9" height="0.5"/><rect x="26" y="395.80" width="6" height="0.6" fill="#5a5a5a"/><rect x="31.10" y="397.56" width="0.9" height="0.5"/><rect x="31.10" y="399.32" width="0.9" height="0.5"/><rect x="31.10" y="401.08" width="0.9" height="0.5"/><rect x="31.10" y="402.84" width="0.9" height="0.5"/><rect x="30.40" y="404.60" width="1.6" height="0.5"/><rect x="31.10" y="406.36" width="0.9" height="0.5"/><rect x="31.10" y="408.12" width="0.9" height="0.5"/><rect x="31.10" y="409.88" width="0.9" height="0.5"/><rect x="31.10" y="411.64" width="0.9" height="0.5"/><rect x="26" y="413.40" width="6" height="0.6" fill="#5a5a5a"/><rect x="31.10" y="415.16" width="0.9" height="0.5"/><rect x="31.10" y="416.92" width="0.9" height="0.5"/><rect x="31.10" y="418.68" width="0.9" height="0.5"/><rect x="31.10" y="420.44" width="0.9" height="0.5"/><rect x="30.40" y="422.20" width="1.6" height="0.5"/><rect x="31.10" y="423.96" width="0.9" height="0.5"/><rect x="31.10" y="425.72" width="0.9" height="0.5"/><rect x="31.10" y="427.48" width="0.9" height="0.5"/><rect x="31.10" y="429.24" width="0.9" height="0.5"/><rect x="26" y="431.00" width="6" height="0.6" fill="#5a5a5a"/><rect x="31.10" y="432.76" width="0.9" height="0.5"/><rect x="31.10" y="434.52" width="0.9" height="0.5"/><rect x="31.10" y="436.28" width="0.9" height="0.5"/><rect x="31.10" y="438.04" width="0.9" height="0.5"/><rect x="30.40" y="439.80" width="1.6" height="0.5"/><rect x="31.10" y="441.56" width="0.9" height="0.5"/><rect x="31.10" y="443.32" width="0.9" height="0.5"/><rect x="31.10" y="445.08" width="0.9" height="0.5"/><rect x="31.10" y="446.84" width="0.9" height="0.5"/><rect x="26" y="448.60" width="6" height="0.6" fill="#5a5a5a"/><rect x="31.10" y="450.36" width="0.9" height="0.5"/><rect x="31.10" y="452.12" width="0.9" height="0.5"/><rect x="31.10" y="453.88" width="0.9" height="0.5"/><rect x="31.10" y="455.64" width="0.9" height="0.5"/><rect x="30.40" y="457.40" width="1.6" height="0.5"/><rect x="31.10" y="459.16" width="0.9" height="0.5"/><rect x="31.10" y="460.92" width="0.9" height="0.5"/><rect x="31.10" y="462.68" width="0.9" height="0.5"/><rect x="31.10" y="464.44" width="0.9" height="0.5"/><rect x="26" y="466.20" width="6" height="0.6" fill="#5a5a5a"/><rect x="31.10" y="467.96" width="0.9" height="0.5"/><rect x="31.10" y="469.72" width="0.9" height="0.5"/><rect x="31.10" y="471.48" width="0.9" height="0.5"/><rect x="31.10" y="473.24" width="0.9" height="0.5"/><rect x="30.40" y="475.00" width="1.6" height="0.5"/><rect x="31.10" y="476.76" width="0.9" height="0.5"/><rect x="31.10" y="478.52" width="0.9" height="0.5"/><rect x="31.10" y="480.28" width="0.9" height="0.5"/><rect x="31.10" y="482.04" width="0.9" height="0.5"/><rect x="26" y="483.80" width="6" height="0.6" fill="#5a5a5a"/><rect x="31.10" y="485.56" width="0.9" height="0.5"/></g><g fill="#b4b4b4" font-size="3.5" font-family="Liberation Sans"><text x="27.2" y="48.10">1</text><text x="27.2" y="51.20">0</text><text x="27.2" y="54.30">0</text><text x="27.2" y="65.70">5</text><text x="27.2" y="68.80">0</text><text x="27.2" y="83.30">0</text><text x="27.2" y="100.90">5</text><text x="27.2" y="104.00">0</text><text x="27.2" y="118.50">1</text><text x="27.2" y="121.60">0</text><text x="27.2" y="124.70">0</text><text x="27.2" y="136.10">1</text><text x="27.2" y="139.20">5</text><text x="27.2" y="142.30">0</text><text x="27.2" y="153.70">2</text><text x="27.2" y="156.80">0</text><text x="27.2" y="159.90">0</text><text x="27.2" y="171.30">2</text><text x="27.2" y="174.40">5</text><text x="27.2" y="177.50">0</text><text x="27.2" y="188.90">3</text><text x="27.2" y="192.00">0</text><text x="27.2" y="195.10">0</text><text x="27.2" y="206.50">3</text><text x="27.2" y="209.60">5</text><text x="27.2" y="212.70">0</text><text x="27.2" y="224.10">4</text><text x="27.2" y="227.20">0</text><text x="27.2" y="230.30">0</text><text x="27.2" y="241.70">4</text><text x="27.2" y="244.80">5</text><text x="27.2" y="247.90">0</text><text x="27.2" y="259.30">5</text><text x="27.2" y="262.40">0</text><text x="27.2" y="265.50">0</text><text x="27.2" y="276.90">5</text><text x="27.2" y="280.00">5</text><text x="27.2" y="283.10">0</text><text x="27.2" y="294.50">6</text><text x="27.2" y="297.60">0</text><text x="27.2" y="300.70">0</text><text x="27.2" y="312.10">6</text><text x="27.2" y="315.20">5</text><text x="27.2" y="318.30">0</text><text x="27.2" y="329.70">7</text><text x="27.2" y="332.80">0</text><text x="27.2" y="335.90">0</text><text x="27.2" y="347.30">7</text><text x="27.2" y="350.40">5</text><text x="27.2" y="353.50">0</text><text x="27.2" y="364.90">8</text><text x="27.2" y="368.00">0</text><text x="27.2" y="371.10">0</text><text x="27.2" y="382.50">8</text><text x="27.2" y="385.60">5</text><text x="27.2" y="388.70">0</text><text x="27.2" y="400.10">9</text><text x="27.2" y="403.20">0</text><text x="27.2" y="406.30">0</text><text x="27.2" y="417.70">9</text><text x="27.2" y="420.80">5</text><text x="27.2" y="423.90">0</text><text x="27.2" y="435.30">1</text><text x="27.2" y="438.40">0</text><text x="27.2" y="441.50">0</text><text x="27.2" y="444.60">0</text><text x="27.2" y="452.90">1</text><text x="27.2" y="456.00">0</text><text x="27.2" y="459.10">5</text><text x="27.2" y="462.20">0</text><text x="27.2" y="470.50">1</text><text x="27.2" y="473.60">1</text><text x="27.2" y="476.70">0</text><text x="27.2" y="479.80">0</text></g></svg>
<svg width="800" height="40"><g fill="#c4c4c4" font-size="3.6" font-family="Liberation Sans"><text x="45.90" y="32.6">400</text><text x="63.50" y="32.6">350</text><text x="81.10" y="32.6">300</text><text x="98.70" y="32.6">250</text><text x="116.30" y="32.6">200</text><text x="133.90" y="32.6">150</text><text x="151.50" y="32.6">100</text><text x="169.10" y="32.6">50</text><text x="186.70" y="32.6">0</text><text x="204.30" y="32.6">50</text><text x="221.90" y="32.6">100</text><text x="239.50" y="32.6">150</text><text x="257.10" y="32.6">200</text><text x="274.70" y="32.6">250</text><text x="292.30" y="32.6">300</text><text x="309.90" y="32.6">350</text><text x="327.50" y="32.6">400</text><text x="345.10" y="32.6">450</text><text x="362.70" y="32.6">500</text><text x="380.30" y="32.6">550</text><text x="397.90" y="32.6">600</text><text x="415.50" y="32.6">650</text><text x="433.10" y="32.6">700</text><text x="450.70" y="32.6">750</text><text x="468.30" y="32.6">800</text><text x="485.90" y="32.6">850</text><text x="503.50" y="32.6">900</text><text x="521.10" y="32.6">950</text><text x="538.70" y="32.6">1000</text><text x="556.30" y="32.6">1050</text><text x="573.90" y="32.6">1100</text><text x="591.50" y="32.6">1150</text><text x="609.10" y="32.6">1200</text><text x="626.70" y="32.6">1250</text><text x="644.30" y="32.6">1300</text><text x="661.90" y="32.6">1350</text><text x="679.50" y="32.6">1400</text><text x="697.10" y="32.6">1450</text></g></svg>
<div style="left:184px;top:78px;width:365px;height:364px;background:#1e1e1e;"></div>
<div style="left:185px;top:79px;width:363px;height:362px;background:#ffffff;"></div>
<svg style="position:absolute;left:0;top:0" width="800" height="493" viewBox="0 0 800 493">
<defs>
<linearGradient id="bg" x1="263" y1="334" x2="440" y2="157" gradientUnits="userSpaceOnUse">
<stop offset="0" stop-color="#f246f2"/><stop offset="0.42" stop-color="#f877da"/><stop offset="0.7" stop-color="#fc9cc0"/><stop offset="1" stop-color="#ffc69e"/>
</linearGradient>
<radialGradient id="og" cx="366" cy="247" r="50" gradientUnits="userSpaceOnUse"><stop offset="0" stop-color="#ff9c6c"/><stop offset="0.28" stop-color="#ffbb88"/><stop offset="0.58" stop-color="#ffe3b2"/><stop offset="0.85" stop-color="#fff6cc"/><stop offset="1" stop-color="#fffbda"/></radialGradient>
<filter id="hglow" x="-20%" y="-20%" width="140%" height="140%"><feMorphology operator="erode" radius="4.2"/><feGaussianBlur stdDeviation="4"/></filter>
<filter id="blur2" x="-20%" y="-20%" width="140%" height="140%"><feGaussianBlur stdDeviation="0.9"/></filter>
<filter id="blur3" x="-20%" y="-20%" width="140%" height="140%"><feGaussianBlur stdDeviation="3.2"/></filter>
<filter id="blur1" x="-20%" y="-20%" width="140%" height="140%"><feGaussianBlur stdDeviation="0.6"/></filter>
<clipPath id="sq"><rect x="263.3" y="157" width="177" height="177" rx="25" ry="25"/></clipPath>
</defs>
<rect x="263.3" y="157" width="177" height="177" rx="25" ry="25" fill="url(#bg)"/>
<g clip-path="url(#sq)">
<rect x="263.3" y="157" width="177" height="177" rx="25" ry="25" fill="none" stroke="#c83cc0" stroke-width="1.4" opacity="0.22" filter="url(#blur1)"/>
<path filter="url(#blur2)" fill="#f3a4f2" d="M349.5,294.5 C326,290 288,251 291.5,224 C294,204 305,190.7 321,190.7 C336,190.7 346,198 351,205 C357,196 367,190.6 381,190.6 C397,190.6 407.5,204 407.5,222 C408,248 384,282 349.5,294.5 Z"/>
<path filter="url(#hglow)" fill="#ffffff" d="M349.5,294.5 C326,290 288,251 291.5,224 C294,204 305,190.7 321,190.7 C336,190.7 346,198 351,205 C357,196 367,190.6 381,190.6 C397,190.6 407.5,204 407.5,222 C408,248 384,282 349.5,294.5 Z"/>
<path filter="url(#blur3)" fill="none" stroke="#ffffff" stroke-width="5" opacity="0.75" d="M338,282 C360,272 385,262 398,250"/>
<path filter="url(#blur2)" fill="none" stroke="#ee70c8" stroke-width="2.5" opacity="0.55" d="M366,250 C370,258 378,260 386,258 C392,256 397,252 400,248"/>
<path filter="url(#blur3)" fill="none" stroke="#f784e6" stroke-width="3" opacity="0.6" d="M353,206 C359,214 361,226 364,238 C367,250 371,258 382,257"/>
<path filter="url(#blur1)" fill="url(#og)" d="M351.5,205 C353,198 366,190.6 380.6,190.6 C397,190.6 407.4,205 407.4,222 C407.4,238 399,252 382,256.5 C372,258.5 367,251 364,241 C361,230 358,214 351.5,205 Z"/>
</g>
</svg>
<div style="left:701px;top:22px;width:6.5px;height:469px;background:#3b3b3b;"></div>
<div style="left:707px;top:22px;width:1px;height:469px;background:#2a2a2a;"></div>
<div style="left:708px;top:22px;width:92px;height:469px;background:#535353;"></div>
<div style="left:799px;top:22px;width:1px;height:469px;background:#3a3a3a;"></div>
<div style="left:26px;top:486px;width:675px;height:5px;background:#535353;"></div>
<div style="left:0px;top:491px;width:800px;height:2px;background:#c9d3de;"></div>
<div style="left:708px;top:22px;width:91px;height:4px;background:#3b3b3b;"></div>
<svg width="800" height="40"><path d="M793.5,24 L795.5,23 L795.5,25 Z M796,24 L798,23 L798,25 Z" fill="#9a9a9a"/></svg>
<div style="left:708px;top:26px;width:91px;height:5.5px;background:#393939;"></div>
<div style="left:708px;top:26px;width:21px;height:5.5px;background:#535353;"></div>
<svg width="800" height="40"><path d="M792.6,28.2 L794.4,28.2 L793.5,29.3 Z" fill="#d0d0d0"/><rect x="795" y="27.5" width="3" height="0.5" fill="#aaa"/><rect x="795" y="28.6" width="3" height="0.5" fill="#aaa"/><rect x="795" y="29.7" width="3" height="0.5" fill="#aaa"/></svg>
<div style="left:708px;top:31.5px;width:85.5px;height:8.07px;background:#535353;"></div>
<div style="left:708px;top:38.57px;width:85.5px;height:1px;background:#464646;"></div>
<div style="left:710px;top:33.3px;width:4.2px;height:4.2px;background:transparent;border:0.6px solid #4a4a4a"></div>
<div style="left:708px;top:39.57px;width:85.5px;height:8.07px;background:#535353;"></div>
<div style="left:708px;top:46.64px;width:85.5px;height:1px;background:#464646;"></div>
<div style="left:710px;top:41.37px;width:4.2px;height:4.2px;background:transparent;border:0.6px solid #4a4a4a"></div>
<div style="left:708px;top:47.64px;width:85.5px;height:8.07px;background:#535353;"></div>
<div style="left:708px;top:54.71px;width:85.5px;height:1px;background:#464646;"></div>
<div style="left:710px;top:49.44px;width:4.2px;height:4.2px;background:transparent;border:0.6px solid #4a4a4a"></div>
<div style="left:708px;top:55.71px;width:85.5px;height:8.07px;background:#535353;"></div>
<div style="left:708px;top:62.78px;width:85.5px;height:1px;background:#464646;"></div>
<div style="left:710px;top:57.51px;width:4.2px;height:4.2px;background:transparent;border:0.6px solid #4a4a4a"></div>
<div style="left:708px;top:63.78px;width:85.5px;height:8.07px;background:#535353;"></div>
<div style="left:708px;top:70.85px;width:85.5px;height:1px;background:#464646;"></div>
<div style="left:710px;top:65.58px;width:4.2px;height:4.2px;background:transparent;border:0.6px solid #4a4a4a"></div>
<div style="left:708px;top:71.85px;width:85.5px;height:8.07px;background:#535353;"></div>
<div style="left:708px;top:78.91999999999999px;width:85.5px;height:1px;background:#464646;"></div>
<div style="left:710px;top:73.64999999999999px;width:4.2px;height:4.2px;background:transparent;border:0.6px solid #4a4a4a"></div>
<div style="left:708px;top:79.92px;width:85.5px;height:8.07px;background:#535353;"></div>
<div style="left:708px;top:86.99000000000001px;width:85.5px;height:1px;background:#464646;"></div>
<div style="left:710px;top:81.72px;width:4.2px;height:4.2px;background:transparent;border:0.6px solid #4a4a4a"></div>
<div style="left:708px;top:87.99000000000001px;width:85.5px;height:8.07px;background:#535353;"></div>
<div style="left:708px;top:95.06px;width:85.5px;height:1px;background:#464646;"></div>
<div style="left:710px;top:89.79px;width:4.2px;height:4.2px;background:transparent;border:0.6px solid #4a4a4a"></div>
<div style="left:708px;top:96.06px;width:85.5px;height:8.07px;background:#535353;"></div>
<div style="left:708px;top:103.13px;width:85.5px;height:1px;background:#464646;"></div>
<div style="left:710px;top:97.86px;width:4.2px;height:4.2px;background:transparent;border:0.6px solid #4a4a4a"></div>
<div style="left:708px;top:104.13px;width:85.5px;height:8.07px;background:#535353;"></div>
<div style="left:708px;top:111.19999999999999px;width:85.5px;height:1px;background:#464646;"></div>
<div style="left:710px;top:105.92999999999999px;width:4.2px;height:4.2px;background:transparent;border:0.6px solid #4a4a4a"></div>
<div style="left:708px;top:112.2px;width:85.5px;height:8.07px;background:#535353;"></div>
<div style="left:708px;top:119.27000000000001px;width:85.5px;height:1px;background:#464646;"></div>
<div style="left:710px;top:114.0px;width:4.2px;height:4.2px;background:transparent;border:0.6px solid #4a4a4a"></div>
<div style="left:708px;top:120.27000000000001px;width:85.5px;height:8.07px;background:#535353;"></div>
<div style="left:708px;top:127.34px;width:85.5px;height:1px;background:#464646;"></div>
<div style="left:710px;top:122.07000000000001px;width:4.2px;height:4.2px;background:transparent;border:0.6px solid #4a4a4a"></div>
<div style="left:708px;top:128.34px;width:85.5px;height:8.07px;background:#535353;"></div>
<div style="left:708px;top:135.41px;width:85.5px;height:1px;background:#464646;"></div>
<div style="left:710px;top:130.14000000000001px;width:4.2px;height:4.2px;background:transparent;border:0.6px solid #4a4a4a"></div>
<div style="left:708px;top:136.41px;width:85.5px;height:8.07px;background:#535353;"></div>
<div style="left:708px;top:143.48px;width:85.5px;height:1px;background:#464646;"></div>
<div style="left:710px;top:138.21px;width:4.2px;height:4.2px;background:transparent;border:0.6px solid #4a4a4a"></div>
<div style="left:708px;top:144.48000000000002px;width:85.5px;height:8.07px;background:#535353;"></div>
<div style="left:708px;top:151.55px;width:85.5px;height:1px;background:#464646;"></div>
<div style="left:710px;top:146.28000000000003px;width:4.2px;height:4.2px;background:transparent;border:0.6px solid #4a4a4a"></div>
<div style="left:708px;top:152.55px;width:85.5px;height:8.07px;background:#535353;"></div>
<div style="left:708px;top:159.62px;width:85.5px;height:1px;background:#464646;"></div>
<div style="left:710px;top:154.35000000000002px;width:4.2px;height:4.2px;background:transparent;border:0.6px solid #4a4a4a"></div>
<div style="left:708px;top:160.62px;width:85.5px;height:8.07px;background:#535353;"></div>
<div style="left:708px;top:167.69px;width:85.5px;height:1px;background:#464646;"></div>
<div style="left:710px;top:162.42000000000002px;width:4.2px;height:4.2px;background:transparent;border:0.6px solid #4a4a4a"></div>
<div style="left:708px;top:168.69px;width:85.5px;height:8.07px;background:#535353;"></div>
<div style="left:708px;top:175.76px;width:85.5px;height:1px;background:#464646;"></div>
<div style="left:710px;top:170.49px;width:4.2px;height:4.2px;background:transparent;border:0.6px solid #4a4a4a"></div>
<div style="left:708px;top:176.76px;width:85.5px;height:8.07px;background:#535353;"></div>
<div style="left:708px;top:183.82999999999998px;width:85.5px;height:1px;background:#464646;"></div>
<div style="left:710px;top:178.56px;width:4.2px;height:4.2px;background:transparent;border:0.6px solid #4a4a4a"></div>
<div style="left:708px;top:184.83px;width:85.5px;height:8.07px;background:#535353;"></div>
<div style="left:708px;top:191.9px;width:85.5px;height:1px;background:#464646;"></div>
<div style="left:710px;top:186.63000000000002px;width:4.2px;height:4.2px;background:transparent;border:0.6px solid #4a4a4a"></div>
<div style="left:708px;top:192.9px;width:85.5px;height:8.07px;background:#535353;"></div>
<div style="left:708px;top:199.97px;width:85.5px;height:1px;background:#464646;"></div>
<div style="left:710px;top:194.70000000000002px;width:4.2px;height:4.2px;background:transparent;border:0.6px solid #4a4a4a"></div>
<div style="left:708px;top:200.97px;width:85.5px;height:8.07px;background:#535353;"></div>
<div style="left:708px;top:208.04px;width:85.5px;height:1px;background:#464646;"></div>
<div style="left:710px;top:202.77px;width:4.2px;height:4.2px;background:transparent;border:0.6px solid #4a4a4a"></div>
<div style="left:708px;top:209.04000000000002px;width:85.5px;height:8.07px;background:#535353;"></div>
<div style="left:708px;top:216.11px;width:85.5px;height:1px;background:#464646;"></div>
<div style="left:710px;top:210.84000000000003px;width:4.2px;height:4.2px;background:transparent;border:0.6px solid #4a4a4a"></div>
<div style="left:708px;top:217.11px;width:85.5px;height:8.07px;background:#535353;"></div>
<div style="left:708px;top:224.18px;width:85.5px;height:1px;background:#464646;"></div>
<div style="left:710px;top:218.91000000000003px;width:4.2px;height:4.2px;background:transparent;border:0.6px solid #4a4a4a"></div>
<div style="left:708px;top:225.18px;width:85.5px;height:8.07px;background:#535353;"></div>
<div style="left:708px;top:232.25px;width:85.5px;height:1px;background:#464646;"></div>
<div style="left:710px;top:226.98000000000002px;width:4.2px;height:4.2px;background:transparent;border:0.6px solid #4a4a4a"></div>
<div style="left:708px;top:233.25px;width:85.5px;height:8.07px;background:#535353;"></div>
<div style="left:708px;top:240.32px;width:85.5px;height:1px;background:#464646;"></div>
<div style="left:710px;top:235.05px;width:4.2px;height:4.2px;background:transparent;border:0.6px solid #4a4a4a"></div>
<div style="left:708px;top:241.32px;width:85.5px;height:8.07px;background:#535353;"></div>
<div style="left:708px;top:248.39px;width:85.5px;height:1px;background:#464646;"></div>
<div style="left:710px;top:243.12px;width:4.2px;height:4.2px;background:transparent;border:0.6px solid #4a4a4a"></div>
<div style="left:708px;top:249.39000000000001px;width:85.5px;height:8.07px;background:#535353;"></div>
<div style="left:708px;top:256.46000000000004px;width:85.5px;height:1px;background:#464646;"></div>
<div style="left:710px;top:251.19000000000003px;width:4.2px;height:4.2px;background:transparent;border:0.6px solid #4a4a4a"></div>
<div style="left:708px;top:257.46000000000004px;width:85.5px;height:8.07px;background:#535353;"></div>
<div style="left:708px;top:264.53000000000003px;width:85.5px;height:1px;background:#464646;"></div>
<div style="left:710px;top:259.26000000000005px;width:4.2px;height:4.2px;background:transparent;border:0.6px solid #4a4a4a"></div>
<div style="left:708px;top:265.53px;width:85.5px;height:8.07px;background:#535353;"></div>
<div style="left:708px;top:272.59999999999997px;width:85.5px;height:1px;background:#464646;"></div>
<div style="left:710px;top:267.33px;width:4.2px;height:4.2px;background:transparent;border:0.6px solid #4a4a4a"></div>
<div style="left:708px;top:273.6px;width:85.5px;height:8.07px;background:#535353;"></div>
<div style="left:708px;top:280.67px;width:85.5px;height:1px;background:#464646;"></div>
<div style="left:710px;top:275.40000000000003px;width:4.2px;height:4.2px;background:transparent;border:0.6px solid #4a4a4a"></div>
<div style="left:708px;top:281.67px;width:85.5px;height:8.07px;background:#535353;"></div>
<div style="left:708px;top:288.74px;width:85.5px;height:1px;background:#464646;"></div>
<div style="left:710px;top:283.47px;width:4.2px;height:4.2px;background:transparent;border:0.6px solid #4a4a4a"></div>
<div style="left:708px;top:289.74px;width:85.5px;height:8.07px;background:#535353;"></div>
<div style="left:708px;top:296.81px;width:85.5px;height:1px;background:#464646;"></div>
<div style="left:710px;top:291.54px;width:4.2px;height:4.2px;background:transparent;border:0.6px solid #4a4a4a"></div>
<div style="left:708px;top:297.81px;width:85.5px;height:8.07px;background:#5d6d82;"></div>
<div style="left:708px;top:304.88px;width:85.5px;height:1px;background:#4d5a6a;"></div>
<div style="left:710px;top:299.61px;width:4.2px;height:4.2px;background:transparent;border:0.6px solid #56657a"></div>
<svg width="800" height="493"><path d="M719,33.00 L723.2,33.00 L724.4,34.10 L724.4,38.20 L719,38.20 Z" fill="#b4b4b4"/><rect x="719.6" y="34.40" width="4.2" height="0.5" fill="#6e6e6e"/><rect x="719.6" y="35.80" width="4.2" height="0.5" fill="#6e6e6e"/><rect x="719.6" y="37.10" width="4.2" height="0.5" fill="#6e6e6e"/><path d="M719,41.07 L723.2,41.07 L724.4,42.17 L724.4,46.27 L719,46.27 Z" fill="#b4b4b4"/><rect x="719.6" y="42.47" width="4.2" height="0.5" fill="#6e6e6e"/><rect x="719.6" y="43.87" width="4.2" height="0.5" fill="#6e6e6e"/><rect x="719.6" y="45.17" width="4.2" height="0.5" fill="#6e6e6e"/><path d="M719,49.14 L723.2,49.14 L724.4,50.24 L724.4,54.34 L719,54.34 Z" fill="#b4b4b4"/><rect x="719.6" y="50.54" width="4.2" height="0.5" fill="#6e6e6e"/><rect x="719.6" y="51.94" width="4.2" height="0.5" fill="#6e6e6e"/><rect x="719.6" y="53.24" width="4.2" height="0.5" fill="#6e6e6e"/><path d="M719,57.21 L723.2,57.21 L724.4,58.31 L724.4,62.41 L719,62.41 Z" fill="#b4b4b4"/><rect x="719.6" y="58.61" width="4.2" height="0.5" fill="#6e6e6e"/><rect x="719.6" y="60.01" width="4.2" height="0.5" fill="#6e6e6e"/><rect x="719.6" y="61.31" width="4.2" height="0.5" fill="#6e6e6e"/><path d="M719,65.28 L723.2,65.28 L724.4,66.38 L724.4,70.48 L719,70.48 Z" fill="#b4b4b4"/><rect x="719.6" y="66.68" width="4.2" height="0.5" fill="#6e6e6e"/><rect x="719.6" y="68.08" width="4.2" height="0.5" fill="#6e6e6e"/><rect x="719.6" y="69.38" width="4.2" height="0.5" fill="#6e6e6e"/><path d="M719,73.35 L723.2,73.35 L724.4,74.45 L724.4,78.55 L719,78.55 Z" fill="#b4b4b4"/><rect x="719.6" y="74.75" width="4.2" height="0.5" fill="#6e6e6e"/><rect x="719.6" y="76.15" width="4.2" height="0.5" fill="#6e6e6e"/><rect x="719.6" y="77.45" width="4.2" height="0.5" fill="#6e6e6e"/><path d="M719,81.42 L723.2,81.42 L724.4,82.52 L724.4,86.62 L719,86.62 Z" fill="#b4b4b4"/><rect x="719.6" y="82.82" width="4.2" height="0.5" fill="#6e6e6e"/><rect x="719.6" y="84.22" width="4.2" height="0.5" fill="#6e6e6e"/><rect x="719.6" y="85.52" width="4.2" height="0.5" fill="#6e6e6e"/><path d="M719,89.49 L723.2,89.49 L724.4,90.59 L724.4,94.69 L719,94.69 Z" fill="#b4b4b4"/><rect x="719.6" y="90.89" width="4.2" height="0.5" fill="#6e6e6e"/><rect x="719.6" y="92.29" width="4.2" height="0.5" fill="#6e6e6e"/><rect x="719.6" y="93.59" width="4.2" height="0.5" fill="#6e6e6e"/><path d="M719,97.56 L723.2,97.56 L724.4,98.66 L724.4,102.76 L719,102.76 Z" fill="#b4b4b4"/><rect x="719.6" y="98.96" width="4.2" height="0.5" fill="#6e6e6e"/><rect x="719.6" y="100.36" width="4.2" height="0.5" fill="#6e6e6e"/><rect x="719.6" y="101.66" width="4.2" height="0.5" fill="#6e6e6e"/><path d="M719,105.63 L723.2,105.63 L724.4,106.73 L724.4,110.83 L719,110.83 Z" fill="#b4b4b4"/><rect x="719.6" y="107.03" width="4.2" height="0.5" fill="#6e6e6e"/><rect x="719.6" y="108.43" width="4.2" height="0.5" fill="#6e6e6e"/><rect x="719.6" y="109.73" width="4.2" height="0.5" fill="#6e6e6e"/><path d="M719,113.70 L723.2,113.70 L724.4,114.80 L724.4,118.90 L719,118.90 Z" fill="#b4b4b4"/><rect x="719.6" y="115.10" width="4.2" height="0.5" fill="#6e6e6e"/><rect x="719.6" y="116.50" width="4.2" height="0.5" fill="#6e6e6e"/><rect x="719.6" y="117.80" width="4.2" height="0.5" fill="#6e6e6e"/><path d="M719,121.77 L723.2,121.77 L724.4,122.87 L724.4,126.97 L719,126.97 Z" fill="#b4b4b4"/><rect x="719.6" y="123.17" width="4.2" height="0.5" fill="#6e6e6e"/><rect x="719.6" y="124.57" width="4.2" height="0.5" fill="#6e6e6e"/><rect x="719.6" y="125.87" width="4.2" height="0.5" fill="#6e6e6e"/><path d="M719,129.84 L723.2,129.84 L724.4,130.94 L724.4,135.04 L719,135.04 Z" fill="#b4b4b4"/><rect x="719.6" y="131.24" width="4.2" height="0.5" fill="#6e6e6e"/><rect x="719.6" y="132.64" width="4.2" height="0.5" fill="#6e6e6e"/><rect x="719.6" y="133.94" width="4.2" height="0.5" fill="#6e6e6e"/><path d="M719,137.91 L723.2,137.91 L724.4,139.01 L724.4,143.11 L719,143.11 Z" fill="#b4b4b4"/><rect x="719.6" y="139.31" width="4.2" height="0.5" fill="#6e6e6e"/><rect x="719.6" y="140.71" width="4.2" height="0.5" fill="#6e6e6e"/><rect x="719.6" y="142.01" width="4.2" height="0.5" fill="#6e6e6e"/><path d="M719,145.98 L723.2,145.98 L724.4,147.08 L724.4,151.18 L719,151.18 Z" fill="#b4b4b4"/><rect x="719.6" y="147.38" width="4.2" height="0.5" fill="#6e6e6e"/><rect x="719.6" y="148.78" width="4.2" height="0.5" fill="#6e6e6e"/><rect x="719.6" y="150.08" width="4.2" height="0.5" fill="#6e6e6e"/><path d="M719,154.05 L723.2,154.05 L724.4,155.15 L724.4,159.25 L719,159.25 Z" fill="#b4b4b4"/><rect x="719.6" y="155.45" width="4.2" height="0.5" fill="#6e6e6e"/><rect x="719.6" y="156.85" width="4.2" height="0.5" fill="#6e6e6e"/><rect x="719.6" y="158.15" width="4.2" height="0.5" fill="#6e6e6e"/><path d="M719,162.12 L723.2,162.12 L724.4,163.22 L724.4,167.32 L719,167.32 Z" fill="#b4b4b4"/><rect x="719.6" y="163.52" width="4.2" height="0.5" fill="#6e6e6e"/><rect x="719.6" y="164.92" width="4.2" height="0.5" fill="#6e6e6e"/><rect x="719.6" y="166.22" width="4.2" height="0.5" fill="#6e6e6e"/><path d="M719,170.19 L723.2,170.19 L724.4,171.29 L724.4,175.39 L719,175.39 Z" fill="#b4b4b4"/><rect x="719.6" y="171.59" width="4.2" height="0.5" fill="#6e6e6e"/><rect x="719.6" y="172.99" width="4.2" height="0.5" fill="#6e6e6e"/><rect x="719.6" y="174.29" width="4.2" height="0.5" fill="#6e6e6e"/><path d="M719,178.26 L723.2,178.26 L724.4,179.36 L724.4,183.46 L719,183.46 Z" fill="#b4b4b4"/><rect x="719.6" y="179.66" width="4.2" height="0.5" fill="#6e6e6e"/><rect x="719.6" y="181.06" width="4.2" height="0.5" fill="#6e6e6e"/><rect x="719.6" y="182.36" width="4.2" height="0.5" fill="#6e6e6e"/><path d="M719,186.33 L723.2,186.33 L724.4,187.43 L724.4,191.53 L719,191.53 Z" fill="#b4b4b4"/><rect x="719.6" y="187.73" width="4.2" height="0.5" fill="#6e6e6e"/><rect x="719.6" y="189.13" width="4.2" height="0.5" fill="#6e6e6e"/><rect x="719.6" y="190.43" width="4.2" height="0.5" fill="#6e6e6e"/><path d="M719,194.40 L723.2,194.40 L724.4,195.50 L724.4,199.60 L719,199.60 Z" fill="#b4b4b4"/><rect x="719.6" y="195.80" width="4.2" height="0.5" fill="#6e6e6e"/><rect x="719.6" y="197.20" width="4.2" height="0.5" fill="#6e6e6e"/><rect x="719.6" y="198.50" width="4.2" height="0.5" fill="#6e6e6e"/><path d="M719,202.47 L723.2,202.47 L724.4,203.57 L724.4,207.67 L719,207.67 Z" fill="#b4b4b4"/><rect x="719.6" y="203.87" width="4.2" height="0.5" fill="#6e6e6e"/><rect x="719.6" y="205.27" width="4.2" height="0.5" fill="#6e6e6e"/><rect x="719.6" y="206.57" width="4.2" height="0.5" fill="#6e6e6e"/><path d="M719,210.54 L723.2,210.54 L724.4,211.64 L724.4,215.74 L719,215.74 Z" fill="#b4b4b4"/><rect x="719.6" y="211.94" width="4.2" height="0.5" fill="#6e6e6e"/><rect x="719.6" y="213.34" width="4.2" height="0.5" fill="#6e6e6e"/><rect x="719.6" y="214.64" width="4.2" height="0.5" fill="#6e6e6e"/><path d="M719,218.61 L723.2,218.61 L724.4,219.71 L724.4,223.81 L719,223.81 Z" fill="#b4b4b4"/><rect x="719.6" y="220.01" width="4.2" height="0.5" fill="#6e6e6e"/><rect x="719.6" y="221.41" width="4.2" height="0.5" fill="#6e6e6e"/><rect x="719.6" y="222.71" width="4.2" height="0.5" fill="#6e6e6e"/><path d="M719,226.68 L723.2,226.68 L724.4,227.78 L724.4,231.88 L719,231.88 Z" fill="#b4b4b4"/><rect x="719.6" y="228.08" width="4.2" height="0.5" fill="#6e6e6e"/><rect x="719.6" y="229.48" width="4.2" height="0.5" fill="#6e6e6e"/><rect x="719.6" y="230.78" width="4.2" height="0.5" fill="#6e6e6e"/><path d="M719,234.75 L723.2,234.75 L724.4,235.85 L724.4,239.95 L719,239.95 Z" fill="#b4b4b4"/><rect x="719.6" y="236.15" width="4.2" height="0.5" fill="#6e6e6e"/><rect x="719.6" y="237.55" width="4.2" height="0.5" fill="#6e6e6e"/><rect x="719.6" y="238.85" width="4.2" height="0.5" fill="#6e6e6e"/><path d="M719,242.82 L723.2,242.82 L724.4,243.92 L724.4,248.02 L719,248.02 Z" fill="#b4b4b4"/><rect x="719.6" y="244.22" width="4.2" height="0.5" fill="#6e6e6e"/><rect x="719.6" y="245.62" width="4.2" height="0.5" fill="#6e6e6e"/><rect x="719.6" y="246.92" width="4.2" height="0.5" fill="#6e6e6e"/><path d="M719,250.89 L723.2,250.89 L724.4,251.99 L724.4,256.09 L719,256.09 Z" fill="#b4b4b4"/><rect x="719.6" y="252.29" width="4.2" height="0.5" fill="#6e6e6e"/><rect x="719.6" y="253.69" width="4.2" height="0.5" fill="#6e6e6e"/><rect x="719.6" y="254.99" width="4.2" height="0.5" fill="#6e6e6e"/><path d="M719,258.96 L723.2,258.96 L724.4,260.06 L724.4,264.16 L719,264.16 Z" fill="#b4b4b4"/><rect x="719.6" y="260.36" width="4.2" height="0.5" fill="#6e6e6e"/><rect x="719.6" y="261.76" width="4.2" height="0.5" fill="#6e6e6e"/><rect x="719.6" y="263.06" width="4.2" height="0.5" fill="#6e6e6e"/><path d="M719,267.03 L723.2,267.03 L724.4,268.13 L724.4,272.23 L719,272.23 Z" fill="#b4b4b4"/><rect x="719.6" y="268.43" width="4.2" height="0.5" fill="#6e6e6e"/><rect x="719.6" y="269.83" width="4.2" height="0.5" fill="#6e6e6e"/><rect x="719.6" y="271.13" width="4.2" height="0.5" fill="#6e6e6e"/><path d="M719,275.10 L723.2,275.10 L724.4,276.20 L724.4,280.30 L719,280.30 Z" fill="#b4b4b4"/><rect x="719.6" y="276.50" width="4.2" height="0.5" fill="#6e6e6e"/><rect x="719.6" y="277.90" width="4.2" height="0.5" fill="#6e6e6e"/><rect x="719.6" y="279.20" width="4.2" height="0.5" fill="#6e6e6e"/><path d="M719,283.17 L723.2,283.17 L724.4,284.27 L724.4,288.37 L719,288.37 Z" fill="#b4b4b4"/><rect x="719.6" y="284.57" width="4.2" height="0.5" fill="#6e6e6e"/><rect x="719.6" y="285.97" width="4.2" height="0.5" fill="#6e6e6e"/><rect x="719.6" y="287.27" width="4.2" height="0.5" fill="#6e6e6e"/><path d="M719,291.24 L723.2,291.24 L724.4,292.34 L724.4,296.44 L719,296.44 Z" fill="#b4b4b4"/><rect x="719.6" y="292.64" width="4.2" height="0.5" fill="#6e6e6e"/><rect x="719.6" y="294.04" width="4.2" height="0.5" fill="#6e6e6e"/><rect x="719.6" y="295.34" width="4.2" height="0.5" fill="#6e6e6e"/><path d="M719,299.31 L723.2,299.31 L724.4,300.41 L724.4,304.51 L719,304.51 Z" fill="#b4b4b4"/><rect x="719.6" y="300.71" width="4.2" height="0.5" fill="#6e6e6e"/><rect x="719.6" y="302.11" width="4.2" height="0.5" fill="#6e6e6e"/><rect x="719.6" y="303.41" width="4.2" height="0.5" fill="#6e6e6e"/></svg>
<div style="left:793.5px;top:31.5px;width:5px;height:274.38px;background:#3e3e3e;"></div>
<div style="left:794.2px;top:87px;width:3.6px;height:213.88px;background:#757575;"></div>
<svg width="800" height="493"><path d="M794.8,36 L797.2,36 L796,34.6 Z" fill="#c8c8c8"/><path d="M794.8,302.48 L797.2,302.48 L796,303.88 Z" fill="#c8c8c8"/></svg>
<div style="left:708px;top:305.88px;width:91px;height:5.9px;background:#535353;"></div>
<svg width="800" height="493"><g fill="none" stroke="#cfcfcf" stroke-width="0.7">
<path d="M764,310.38 L766,307.38 L768,310.38 Z" />
<rect x="774.5" y="307.28" width="4" height="3.3"/>
<path d="M785.5,307.28 L789,307.28 M786,307.88 L786.4,310.68 L788.2,310.68 L788.6,307.88"/>
</g></svg>
<div style="left:708px;top:311.7px;width:91px;height:1.6px;background:#2c2c2c;"></div>
<div style="left:708px;top:313.3px;width:91px;height:5.8px;background:#393939;"></div>
<div style="left:708px;top:313.3px;width:13px;height:5.8px;background:#535353;"></div>
<svg width="800" height="493"><path d="M792.6,315.5 L794.4,315.5 L793.5,316.6 Z" fill="#d0d0d0"/><rect x="795" y="314.8" width="3" height="0.5" fill="#aaa"/><rect x="795" y="315.9" width="3" height="0.5" fill="#aaa"/><rect x="795" y="317" width="3" height="0.5" fill="#aaa"/></svg>
<div style="left:711px;top:321.8px;width:31px;height:6.6px;background:#3c3c3c;"></div>
<div style="left:742px;top:321.8px;width:7px;height:6.6px;background:#666666;border:0.5px solid #474747;background:linear-gradient(#6c6c6c,#606060)"></div>
<svg width="800" height="493"><path d="M744.50,324.60 L746.50,324.60 L745.50,325.80 Z" fill="#e0e0e0"/></svg>
<div class="l" style="left:712.5px;top:323.60px;font-size:4.6px;color:#ececec;">Arial</div>
<div style="left:752.6px;top:321.8px;width:19.5px;height:6.6px;background:#3c3c3c;"></div>
<div style="left:772.1px;top:321.8px;width:7px;height:6.6px;background:#666666;border:0.5px solid #474747;background:linear-gradient(#6c6c6c,#606060)"></div>
<svg width="800" height="493"><path d="M774.60,324.60 L776.60,324.60 L775.60,325.80 Z" fill="#e0e0e0"/></svg>
<div class="l" style="left:754px;top:323.60px;font-size:4.6px;color:#ececec;">Regular</div>
<div style="left:710px;top:330.7px;width:80px;height:0.6px;background:#474747;"></div>
<div style="left:716px;top:333px;width:25px;height:6px;background:#3c3c3c;"></div>
<div style="left:741px;top:333px;width:7px;height:6px;background:#666666;border:0.5px solid #474747;background:linear-gradient(#6c6c6c,#606060)"></div>
<svg width="800" height="493"><path d="M743.50,335.50 L745.50,335.50 L744.50,336.70 Z" fill="#e0e0e0"/></svg>
<div class="l" style="left:717px;top:334.60px;font-size:4.4px;color:#ececec;">24</div>
<div style="left:758px;top:333px;width:21px;height:6px;background:#3c3c3c;"></div>
<div style="left:779px;top:333px;width:6.5px;height:6px;background:#666666;border:0.5px solid #474747;background:linear-gradient(#6c6c6c,#606060)"></div>
<svg width="800" height="493"><path d="M781.25,335.50 L783.25,335.50 L782.25,336.70 Z" fill="#e0e0e0"/></svg>
<div style="left:716px;top:341px;width:25px;height:6.6px;background:#3c3c3c;"></div>
<div style="left:741px;top:341px;width:7px;height:6.6px;background:#666666;border:0.5px solid #474747;background:linear-gradient(#6c6c6c,#606060)"></div>
<svg width="800" height="493"><path d="M743.50,343.80 L745.50,343.80 L744.50,345.00 Z" fill="#e0e0e0"/></svg>
<div style="left:758px;top:341px;width:21px;height:6.6px;background:#3c3c3c;"></div>
<div style="left:779px;top:341px;width:6.5px;height:6.6px;background:#666666;border:0.5px solid #474747;background:linear-gradient(#6c6c6c,#606060)"></div>
<svg width="800" height="493"><path d="M781.25,343.80 L783.25,343.80 L782.25,345.00 Z" fill="#e0e0e0"/></svg>
<div class="l" style="left:759px;top:343.00px;font-size:4.4px;color:#ececec;">0</div>
<div style="left:710px;top:349.4px;width:80px;height:0.6px;background:#474747;"></div>
<div style="left:716px;top:352px;width:22px;height:6.7px;background:#3c3c3c;"></div>
<div style="left:738px;top:352px;width:6px;height:6.7px;background:#666666;border:0.5px solid #474747;background:linear-gradient(#6c6c6c,#606060)"></div>
<svg width="800" height="493"><path d="M740.00,354.85 L742.00,354.85 L741.00,356.05 Z" fill="#e0e0e0"/></svg>
<div class="l" style="left:717px;top:353.80px;font-size:4.4px;color:#ececec;">0%</div>
<div style="left:710px;top:360.5px;width:80px;height:0.6px;background:#474747;"></div>
<div style="left:716px;top:362.2px;width:19.4px;height:6.6px;background:#3c3c3c;"></div>
<div class="l" style="left:717.5px;top:364.10px;font-size:4.4px;color:#ececec;">100%</div>
<div style="left:766px;top:362px;width:19px;height:6.6px;background:#3c3c3c;"></div>
<div class="l" style="left:767.5px;top:364.00px;font-size:4.4px;color:#ececec;">100%</div>
<div style="left:716px;top:370px;width:19.4px;height:6px;background:#3c3c3c;"></div>
<div class="l" style="left:717.5px;top:371.60px;font-size:4.4px;color:#ececec;">0</div>
<div style="left:766.5px;top:370px;width:18.5px;height:6.3px;background:#f55ee8;border:0.5px solid #3a3a3a"></div>
<div style="left:710px;top:389.4px;width:80px;height:0.6px;background:#474747;"></div>
<div style="left:715px;top:391.6px;width:8px;height:7px;background:#3b3b3b;"></div>
<div style="left:710px;top:400.6px;width:80px;height:0.6px;background:#474747;"></div>
<div style="left:711px;top:403.2px;width:46px;height:6.2px;background:#626262;border:0.5px solid #444;background:linear-gradient(#6a6a6a,#585858)"></div>
<div style="left:767.8px;top:403.2px;width:18.2px;height:6.2px;background:#626262;border:0.5px solid #444;background:linear-gradient(#6a6a6a,#585858)"></div>
<svg width="800" height="493"><g fill="none" stroke="#c8c8c8" stroke-width="0.6">
<path d="M710,334 L714,334 M712,334 L712,338.5 M711,338.5 L713,338.5 M710.5,333.2 L710.5,339"/>
<path d="M751.5,334 L755.5,334 L755.5,336 L752,336 L752,338.5 L755.5,338.5"/>
<path d="M710,342 L710,347 M712,343 C714,343 714,347 712,347 M712,344.5 L714,344.5"/>
<rect x="751.3" y="341.8" width="5" height="4"/><path d="M751.3,347 L756.3,347"/>
<path d="M710,356.5 L714,356.5 M710.5,355 L712,353 L713.5,355"/>
<path d="M709.5,362.8 L714,362.8 M710.5,362.8 L710.5,368.5 M712.6,362.8 L712.6,368.5"/>
<path d="M758.5,362.8 L764.5,362.8 M761.5,362.8 L761.5,368.5 M760,368.5 L763,368.5"/>
<path d="M710,371 L710,376 M711,373.5 C712,371 714,371 714,373 M712,376 L714,376 L714,372"/>
<path d="M716.5,382.5 L719.5,382.5 M718,382.5 L718,386 M726,382.5 L729,382.5 M727.5,382.5 L726.8,386 M733.5,382.5 L738,382.5 M735,382.5 L735,386 M736.5,382.5 L736.5,386 M742.5,382.5 L746.5,382.5 M744,382.5 L744,386 M750,382.5 L753.5,382.5 M751.5,382.5 L751.5,386 M759,382.5 L762,382.5 M760.5,382.5 L760.5,386 M768,382.5 L771,382.5 M769.5,382.5 L769.5,386.5 M768,386.5 L771,386.5 M776.5,382.5 L780.5,382.5 M778.5,382.5 L778.5,386 M776.5,384.3 L780.5,384.3"/>
<path d="M717.5,397 L717.5,393.5 C717.5,392.5 719.5,392.5 719.5,393.5 M717,395 L719,395 M716.5,397 L720.5,397"/>
<path d="M725.5,396.5 C726,394 728,393 729,393.5 M734,396 L737.5,393 M734,393 L737.5,396.5 M742.5,396.5 C743,394 745,393 746,393.5 M751,396.5 L754,396.5 M750.5,394 L755,394 M759,393 L762.5,393 M760.8,393 L760,397 M767.5,393 L767.5,397 M769,393.5 L770.5,393.5 M776,393 L779.5,397 M776.5,396 L779,393.5"/>
<path d="M760,404.5 L761.5,407.5 M762.5,406.5 L765,407.5"/>
</g></svg>
<div style="left:708px;top:411.3px;width:91px;height:1.7px;background:#2c2c2c;"></div>
<div style="left:708px;top:413px;width:91px;height:6px;background:#393939;"></div>
<div style="left:708px;top:413px;width:13px;height:6px;background:#535353;"></div>
<svg width="800" height="493"><path d="M792.6,415.2 L794.4,415.2 L793.5,416.3 Z" fill="#d0d0d0"/><rect x="795" y="414.5" width="3" height="0.5" fill="#aaa"/><rect x="795" y="415.6" width="3" height="0.5" fill="#aaa"/><rect x="795" y="416.7" width="3" height="0.5" fill="#aaa"/></svg>
<div style="left:724px;top:421.5px;width:8px;height:7.1px;background:#3b3b3b;"></div>
<svg width="800" height="493"><g fill="#b8b8b8"><rect x="716.30" y="422.80" width="4.4" height="0.7"/><rect x="716.30" y="424.20" width="4.4" height="0.7"/><rect x="716.30" y="425.60" width="4.4" height="0.7"/><rect x="716.30" y="427.00" width="3" height="0.7"/><rect x="725.30" y="422.80" width="4.4" height="0.7"/><rect x="725.30" y="424.20" width="4.4" height="0.7"/><rect x="725.30" y="425.60" width="4.4" height="0.7"/><rect x="725.30" y="427.00" width="3" height="0.7"/><rect x="734.80" y="422.80" width="4.4" height="0.7"/><rect x="734.80" y="424.20" width="4.4" height="0.7"/><rect x="734.80" y="425.60" width="4.4" height="0.7"/><rect x="734.80" y="427.00" width="3" height="0.7"/><rect x="746.80" y="422.80" width="4.4" height="0.7"/><rect x="746.80" y="424.20" width="4.4" height="0.7"/><rect x="746.80" y="425.60" width="4.4" height="0.7"/><rect x="746.80" y="427.00" width="3" height="0.7"/><rect x="755.60" y="422.80" width="4.4" height="0.7"/><rect x="755.60" y="424.20" width="4.4" height="0.7"/><rect x="755.60" y="425.60" width="4.4" height="0.7"/><rect x="755.60" y="427.00" width="3" height="0.7"/><rect x="764.30" y="422.80" width="4.4" height="0.7"/><rect x="764.30" y="424.20" width="4.4" height="0.7"/><rect x="764.30" y="425.60" width="4.4" height="0.7"/><rect x="764.30" y="427.00" width="3" height="0.7"/><rect x="778.30" y="422.80" width="4.4" height="0.7"/><rect x="778.30" y="424.20" width="4.4" height="0.7"/><rect x="778.30" y="425.60" width="4.4" height="0.7"/><rect x="778.30" y="427.00" width="3" height="0.7"/></g></svg>
<div style="left:718.4px;top:433.2px;width:19.2px;height:6.4px;background:#3c3c3c;"></div>
<div class="l" style="left:719.5px;top:435.00px;font-size:4.4px;color:#ececec;">0</div>
<div style="left:757.8px;top:433.2px;width:19.2px;height:6.4px;background:#3c3c3c;"></div>
<div class="l" style="left:759px;top:435.00px;font-size:4.4px;color:#ececec;">0</div>
<div style="left:718.4px;top:442px;width:19.2px;height:6px;background:#3c3c3c;"></div>
<div class="l" style="left:719.5px;top:443.60px;font-size:4.4px;color:#ececec;">0</div>
<div style="left:710px;top:449.6px;width:80px;height:0.6px;background:#474747;"></div>
<div style="left:718.4px;top:451.7px;width:19.2px;height:6.3px;background:#3c3c3c;"></div>
<div class="l" style="left:719.5px;top:453.40px;font-size:4.4px;color:#ececec;">0</div>
<div style="left:757.8px;top:451.7px;width:19.2px;height:6.3px;background:#3c3c3c;"></div>
<div class="l" style="left:759px;top:453.40px;font-size:4.4px;color:#ececec;">0</div>
<svg width="800" height="493"><g fill="none" stroke="#c0c0c0" stroke-width="0.6">
<path d="M711,436.5 L713.5,436.5 M712.5,435.5 L713.5,436.5 L712.5,437.5 M714.5,434.5 L714.5,438.5"/>
<path d="M750.5,436.5 L754.5,436.5 M752.5,434.5 L752.5,438.5 M750.5,434.5 L754.5,434.5"/>
<path d="M711,443 L713,443 M714,443 L714,447.5 L716,447.5"/>
<path d="M711,453 L713,453 M714,453 L716.5,453 L716.5,457 L714,457 Z"/>
<path d="M752,457 L754,457 M754.5,453 L757,453 L757,457 L754.5,457 Z"/>
</g></svg>
<div style="left:747px;top:462px;width:38px;height:7px;background:#5e5e5e;background:linear-gradient(#656565,#585858);border:0.5px solid #454545"></div>
<div style="left:747px;top:471px;width:38px;height:7px;background:#5e5e5e;background:linear-gradient(#656565,#585858);border:0.5px solid #454545"></div>
<svg width="800" height="493"><g fill="#cfcfcf"><path d="M782.5,465 L783.5,464 L784.5,465 Z M782.5,466.5 L783.5,467.5 L784.5,466.5 Z M782.5,474 L783.5,473 L784.5,474 Z M782.5,475.5 L783.5,476.5 L784.5,475.5 Z"/></g></svg>
<div style="left:712px;top:484px;width:4.2px;height:4.2px;background:#4a4a4a;border:0.5px solid #3e3e3e"></div>
<div style="left:26px;top:486px;width:675px;height:5px;background:#3b3b3b;"></div>
<div style="left:26px;top:486px;width:16px;height:5px;background:#3a3a3a;"></div>
<div class="l" style="left:27px;top:487.40px;font-size:4.2px;color:#d0d0d0;">100%</div>
<div style="left:42px;top:486px;width:8px;height:5px;background:#555555;"></div>
<div style="left:50px;top:486px;width:66px;height:5px;background:#4a4a4a;"></div>
<svg width="800" height="493"><circle cx="46.3" cy="488.5" r="1.5" fill="none" stroke="#d8d8d8" stroke-width="0.7"/><path d="M112.3,487 L114.3,488.5 L112.3,490 Z" fill="#d0d0d0"/></svg>
<div class="l" style="left:73.5px;top:487.60px;font-size:3.8px;color:#c8c8c8;">2.03M/14.3M</div>
<div style="left:700.5px;top:486px;width:7px;height:5px;background:#535353;"></div>
<div style="left:0px;top:491px;width:800px;height:2px;background:#c3d2e0;"></div>
<div style="left:85px;top:491px;width:18px;height:2px;background:#eef2f6;"></div>
<div style="left:106px;top:491px;width:21px;height:2px;background:#eef2f6;"></div>
<div style="left:129px;top:491px;width:20px;height:2px;background:#eef2f6;"></div>
<div style="left:151px;top:491px;width:19px;height:2px;background:#eef2f6;"></div>
<div style="left:172px;top:491px;width:20px;height:2px;background:#eef2f6;"></div>
<div style="left:194px;top:491px;width:20px;height:2px;background:#eef2f6;"></div>
<div style="left:701.8px;top:47.5px;width:12.8px;height:18px;background:#535353;border:0.5px solid #2e2e2e"></div>
<div style="left:701.8px;top:47.5px;width:12.8px;height:3.4px;background:#393939;"></div>
<svg width="800" height="493"><g fill="#bdbdbd">
<path d="M704,49.2 L705.2,48.5 L705.2,49.9 Z M705.6,49.2 L706.8,48.5 L706.8,49.9 Z"/>
<path d="M711.5,48.5 L713,50 M713,48.5 L711.5,50" stroke="#bdbdbd" stroke-width="0.5"/>
<rect x="705" y="53.3" width="7" height="0.7" fill="#3c3c3c"/>
<rect x="706" y="57.2" width="3" height="3.2"/><rect x="709.8" y="57.2" width="1.2" height="1.2"/><rect x="709.8" y="59.2" width="1.2" height="1.2"/>
<rect x="706" y="61.5" width="5" height="1.5"/>
</g></svg>
<svg width="800" height="493">
<path d="M629.5,470 C629.5,464.5 633,461.2 638.5,461.2 L648.5,461.2 C652.5,461.2 654.8,462.8 655.8,465.2 L640,465.2 C634.5,465.2 630.5,467 629.5,470 Z" fill="#fbb6cc"/>
<rect x="628.8" y="465" width="56.8" height="26.6" rx="9.5" ry="9.5" fill="#ffffff" stroke="#a9674c" stroke-width="0.7"/>
<path d="M629.5,470 C630.5,466.6 634.5,465.2 640,465.2 L655.8,465.2" fill="none" stroke="#a9674c" stroke-width="0.5" opacity="0.6"/>
<g fill="#ef7f9c">
<rect x="633.8" y="470.2" width="5.4" height="3.8" fill="none" stroke="#ef7f9c" stroke-width="1.3"/><rect x="635.8" y="468.5" width="1.4" height="7.8"/>
<rect x="646.2" y="468.8" width="1.1" height="1.6"/><rect x="647.8" y="469.2" width="5.2" height="1.1"/><rect x="647.6" y="469.2" width="1.1" height="6.2"/><rect x="652" y="469.2" width="1.1" height="6.2"/><rect x="649.4" y="471.4" width="1.9" height="2.8" fill="none" stroke="#ef7f9c" stroke-width="0.9"/>
<rect x="633.8" y="480" width="5.4" height="1"/><rect x="633.3" y="482.3" width="6.4" height="1"/><rect x="635.8" y="478.3" width="1.4" height="7.3"/><rect x="634.3" y="478.2" width="0.9" height="1.2"/><rect x="637.8" y="478.2" width="0.9" height="1.2"/>
<path d="M649.6,486 L646.4,482.4 C645.2,481 646,478.8 647.9,478.8 C648.8,478.8 649.3,479.4 649.6,479.9 C649.9,479.4 650.4,478.8 651.3,478.8 C653.2,478.8 654,481 652.8,482.4 Z"/>
</g>
<ellipse cx="660" cy="479.2" rx="2.2" ry="1.3" fill="#f6a2b6"/>
<ellipse cx="680.6" cy="479.2" rx="2.2" ry="1.3" fill="#f6a2b6"/>
<circle cx="663.4" cy="474.4" r="3.9" fill="#8b4828"/>
<circle cx="677.2" cy="474.4" r="3.9" fill="#8b4828"/>
<circle cx="664.5" cy="473.6" r="0.9" fill="#fff"/><circle cx="662.6" cy="475.6" r="0.5" fill="#fff"/>
<circle cx="678.3" cy="473.6" r="0.9" fill="#fff"/><circle cx="676.4" cy="475.6" r="0.5" fill="#fff"/>
<path d="M669.2,477.2 C671,478.2 672.2,479.8 671.8,482.2 C671.5,483.8 670.8,484.8 670.3,485.3 C669.6,484.2 668.9,482.6 668.7,481 C668.5,479.5 668.6,478.2 669.2,477.2 Z" fill="#f39cb0"/>
</svg>
<svg width="800" height="493"><g fill="rgb(240,240,240)" opacity="0.96"><rect x="16.00" y="4.75" width="3.61" height="0.6"/><rect x="16.24" y="2.90" width="0.6" height="4.30"/><rect x="17.51" y="2.90" width="0.6" height="4.30"/><rect x="18.77" y="2.90" width="0.6" height="4.30"/><rect x="21.38" y="3.67" width="2.53" height="0.6"/><rect x="20.30" y="4.75" width="3.61" height="0.6"/><rect x="21.81" y="2.90" width="0.6" height="4.30"/></g><g fill="rgb(240,240,240)" opacity="0.96"><rect x="36.00" y="3.67" width="3.61" height="0.6"/><rect x="37.08" y="4.75" width="2.53" height="0.6"/><rect x="37.51" y="4.40" width="0.6" height="2.79"/><rect x="40.30" y="3.67" width="3.61" height="0.6"/><rect x="40.30" y="4.75" width="3.61" height="0.6"/><rect x="40.54" y="2.90" width="0.6" height="4.30"/><rect x="41.81" y="2.90" width="0.6" height="4.30"/><rect x="43.07" y="2.90" width="0.6" height="4.30"/></g><g fill="rgb(240,240,240)" opacity="0.96"><rect x="55.50" y="3.67" width="3.61" height="0.6"/><rect x="55.50" y="4.75" width="3.61" height="0.6"/><rect x="57.01" y="2.90" width="0.6" height="4.30"/><rect x="59.80" y="5.95" width="3.61" height="0.6"/><rect x="61.31" y="2.90" width="0.6" height="4.30"/><rect x="62.57" y="2.90" width="0.6" height="4.30"/></g><g fill="rgb(240,240,240)" opacity="0.96"><rect x="75.08" y="3.67" width="2.53" height="0.6"/><rect x="74.00" y="4.75" width="3.61" height="0.6"/><rect x="74.24" y="2.90" width="0.6" height="4.30"/><rect x="75.51" y="2.90" width="0.6" height="4.30"/><rect x="76.77" y="2.90" width="0.6" height="4.30"/><rect x="78.30" y="3.67" width="3.61" height="0.6"/><rect x="78.30" y="4.75" width="3.61" height="0.6"/><rect x="78.30" y="5.95" width="3.61" height="0.6"/><rect x="78.54" y="4.40" width="0.6" height="2.79"/></g><g fill="rgb(240,240,240)" opacity="0.96"><rect x="92.50" y="3.67" width="3.61" height="0.6"/><rect x="92.50" y="4.75" width="3.61" height="0.6"/><rect x="95.27" y="4.40" width="0.6" height="2.79"/><rect x="96.80" y="3.67" width="3.61" height="0.6"/><rect x="96.80" y="4.75" width="3.61" height="0.6"/><rect x="98.31" y="4.40" width="0.6" height="2.79"/><rect x="99.57" y="2.90" width="0.6" height="4.30"/></g><g fill="rgb(240,240,240)" opacity="0.96"><rect x="112.00" y="4.75" width="3.61" height="0.6"/><rect x="112.00" y="5.95" width="3.61" height="0.6"/><rect x="113.51" y="2.90" width="0.6" height="4.30"/><rect x="116.30" y="3.67" width="3.61" height="0.6"/><rect x="116.30" y="4.75" width="3.61" height="0.6"/><rect x="117.81" y="4.40" width="0.6" height="2.79"/><rect x="119.07" y="2.90" width="0.6" height="4.30"/></g><g fill="rgb(240,240,240)" opacity="0.96"><rect x="131.00" y="3.67" width="3.61" height="0.6"/><rect x="132.08" y="4.75" width="2.53" height="0.6"/><rect x="131.24" y="2.90" width="0.6" height="4.30"/><rect x="132.51" y="2.90" width="0.6" height="4.30"/><rect x="133.77" y="2.90" width="0.6" height="4.30"/><rect x="135.30" y="3.67" width="3.61" height="0.6"/><rect x="136.81" y="4.40" width="0.6" height="2.79"/><rect x="138.07" y="4.40" width="0.6" height="2.79"/></g><g fill="rgb(240,240,240)" opacity="0.96"><rect x="167.50" y="3.67" width="3.61" height="0.6"/><rect x="168.58" y="4.75" width="2.53" height="0.6"/><rect x="168.58" y="5.95" width="2.53" height="0.6"/><rect x="167.74" y="4.40" width="0.6" height="2.79"/><rect x="169.01" y="4.40" width="0.6" height="2.79"/><rect x="170.27" y="4.40" width="0.6" height="2.79"/><rect x="171.80" y="4.75" width="3.61" height="0.6"/><rect x="173.31" y="2.90" width="0.6" height="4.30"/><rect x="174.57" y="2.90" width="0.6" height="4.30"/></g><g fill="rgb(240,240,240)" opacity="0.96"><rect x="187.00" y="3.67" width="3.61" height="0.6"/><rect x="187.00" y="4.75" width="3.61" height="0.6"/><rect x="188.08" y="5.95" width="2.53" height="0.6"/><rect x="192.38" y="3.67" width="2.53" height="0.6"/><rect x="191.30" y="4.75" width="3.61" height="0.6"/><rect x="192.81" y="4.40" width="0.6" height="2.79"/></g><g fill="rgb(240,240,240)" opacity="0.96"><rect x="209.00" y="3.67" width="3.61" height="0.6"/><rect x="209.00" y="4.75" width="3.61" height="0.6"/><rect x="211.77" y="2.90" width="0.6" height="4.30"/><rect x="213.30" y="4.75" width="3.61" height="0.6"/><rect x="214.38" y="5.95" width="2.53" height="0.6"/><rect x="214.81" y="4.40" width="0.6" height="2.79"/><rect x="216.07" y="4.40" width="0.6" height="2.79"/></g><g fill="rgb(225,225,225)" opacity="0.72"><rect x="64.00" y="14.25" width="4.03" height="0.6"/><rect x="65.21" y="15.30" width="2.82" height="0.6"/><rect x="64.30" y="13.50" width="0.6" height="4.20"/><rect x="68.80" y="14.25" width="4.03" height="0.6"/><rect x="68.80" y="15.30" width="4.03" height="0.6"/><rect x="70.52" y="14.97" width="0.6" height="2.73"/></g><g fill="rgb(225,225,225)" opacity="0.87"><rect x="83.01" y="14.50" width="2.35" height="0.6"/><rect x="82.00" y="16.62" width="3.36" height="0.6"/><rect x="83.38" y="15.20" width="0.6" height="2.60"/><rect x="84.56" y="13.80" width="0.6" height="4.00"/><rect x="86.00" y="14.50" width="3.36" height="0.6"/><rect x="87.01" y="15.50" width="2.35" height="0.6"/><rect x="86.20" y="15.20" width="0.6" height="2.60"/><rect x="87.38" y="13.80" width="0.6" height="4.00"/></g><g fill="rgb(225,225,225)" opacity="0.46"><rect x="140.91" y="14.95" width="2.12" height="0.6"/><rect x="140.00" y="16.96" width="3.02" height="0.6"/><rect x="140.15" y="14.30" width="0.6" height="3.80"/><rect x="143.60" y="14.95" width="3.02" height="0.6"/><rect x="143.60" y="15.90" width="3.02" height="0.6"/><rect x="144.81" y="15.63" width="0.6" height="2.47"/><rect x="147.20" y="14.95" width="3.02" height="0.6"/><rect x="148.11" y="16.96" width="2.12" height="0.6"/><rect x="148.41" y="14.30" width="0.6" height="3.80"/><rect x="150.80" y="14.95" width="3.02" height="0.6"/><rect x="150.80" y="15.90" width="3.02" height="0.6"/><rect x="150.80" y="16.96" width="3.02" height="0.6"/><rect x="150.95" y="14.30" width="0.6" height="3.80"/><rect x="152.01" y="14.30" width="0.6" height="3.80"/><rect x="153.07" y="15.63" width="0.6" height="2.47"/><rect x="154.40" y="14.95" width="3.02" height="0.6"/><rect x="154.40" y="15.90" width="3.02" height="0.6"/><rect x="154.40" y="16.96" width="3.02" height="0.6"/><rect x="155.61" y="14.30" width="0.6" height="3.80"/></g><g fill="rgb(225,225,225)" opacity="0.87"><rect x="109.00" y="14.35" width="3.57" height="0.6"/><rect x="109.00" y="15.40" width="3.57" height="0.6"/><rect x="110.07" y="16.58" width="2.50" height="0.6"/><rect x="110.48" y="13.60" width="0.6" height="4.20"/><rect x="113.25" y="14.35" width="3.57" height="0.6"/><rect x="114.32" y="16.58" width="2.50" height="0.6"/><rect x="113.49" y="13.60" width="0.6" height="4.20"/><rect x="117.50" y="14.35" width="3.57" height="0.6"/><rect x="118.57" y="16.58" width="2.50" height="0.6"/><rect x="118.98" y="13.60" width="0.6" height="4.20"/><rect x="120.23" y="15.07" width="0.6" height="2.73"/><rect x="121.75" y="14.35" width="3.57" height="0.6"/><rect x="121.75" y="15.40" width="3.57" height="0.6"/><rect x="123.23" y="13.60" width="0.6" height="4.20"/></g><g fill="rgb(200,200,200)" opacity="0.72"><rect x="29.80" y="24.68" width="3.64" height="0.6"/><rect x="29.80" y="25.65" width="3.64" height="0.6"/><rect x="29.80" y="26.74" width="3.64" height="0.6"/><rect x="30.05" y="24.00" width="0.6" height="3.90"/><rect x="32.59" y="24.00" width="0.6" height="3.90"/><rect x="34.13" y="25.65" width="3.64" height="0.6"/><rect x="34.13" y="26.74" width="3.64" height="0.6"/><rect x="34.38" y="24.00" width="0.6" height="3.90"/><rect x="35.65" y="24.00" width="0.6" height="3.90"/><rect x="36.92" y="25.36" width="0.6" height="2.54"/><rect x="38.46" y="25.65" width="3.64" height="0.6"/><rect x="38.46" y="26.74" width="3.64" height="0.6"/><rect x="39.98" y="24.00" width="0.6" height="3.90"/></g><g fill="rgb(200,200,200)" opacity="0.72"><rect x="107.00" y="24.68" width="3.64" height="0.6"/><rect x="107.00" y="25.65" width="3.64" height="0.6"/><rect x="108.52" y="24.00" width="0.6" height="3.90"/><rect x="112.42" y="24.68" width="2.55" height="0.6"/><rect x="111.33" y="25.65" width="3.64" height="0.6"/><rect x="111.33" y="26.74" width="3.64" height="0.6"/><rect x="114.12" y="24.00" width="0.6" height="3.90"/><rect x="115.66" y="24.68" width="3.64" height="0.6"/><rect x="115.66" y="25.65" width="3.64" height="0.6"/><rect x="116.75" y="26.74" width="2.55" height="0.6"/><rect x="115.91" y="24.00" width="0.6" height="3.90"/><rect x="117.18" y="24.00" width="0.6" height="3.90"/></g><g fill="rgb(200,200,200)" opacity="0.72"><rect x="148.50" y="24.68" width="3.61" height="0.6"/><rect x="148.50" y="25.65" width="3.61" height="0.6"/><rect x="148.50" y="26.74" width="3.61" height="0.6"/><rect x="148.74" y="24.00" width="0.6" height="3.90"/><rect x="151.27" y="24.00" width="0.6" height="3.90"/><rect x="152.80" y="24.68" width="3.61" height="0.6"/><rect x="153.88" y="25.65" width="2.53" height="0.6"/><rect x="153.88" y="26.74" width="2.53" height="0.6"/><rect x="153.04" y="25.36" width="0.6" height="2.54"/><rect x="155.57" y="24.00" width="0.6" height="3.90"/></g><g fill="rgb(235,235,235)" opacity="0.90"><rect x="194.00" y="26.74" width="3.65" height="0.6"/><rect x="194.25" y="25.36" width="0.6" height="2.54"/><rect x="195.53" y="24.00" width="0.6" height="3.90"/><rect x="199.45" y="24.68" width="2.56" height="0.6"/><rect x="198.35" y="25.65" width="3.65" height="0.6"/><rect x="198.60" y="25.36" width="0.6" height="2.54"/><rect x="199.88" y="24.00" width="0.6" height="3.90"/><rect x="202.70" y="24.68" width="3.65" height="0.6"/><rect x="202.70" y="25.65" width="3.65" height="0.6"/><rect x="204.23" y="25.36" width="0.6" height="2.54"/><rect x="207.05" y="24.68" width="3.65" height="0.6"/><rect x="208.15" y="26.74" width="2.56" height="0.6"/><rect x="207.30" y="24.00" width="0.6" height="3.90"/><rect x="209.86" y="24.00" width="0.6" height="3.90"/></g><g fill="rgb(235,235,235)" opacity="0.90"><rect x="256.50" y="24.68" width="3.36" height="0.6"/><rect x="256.50" y="25.65" width="3.36" height="0.6"/><rect x="257.88" y="24.00" width="0.6" height="3.90"/><rect x="261.51" y="24.68" width="2.35" height="0.6"/><rect x="260.50" y="25.65" width="3.36" height="0.6"/><rect x="261.88" y="25.36" width="0.6" height="2.54"/></g><g fill="rgb(200,200,200)" opacity="0.72"><rect x="299.00" y="24.68" width="3.36" height="0.6"/><rect x="299.20" y="24.00" width="0.6" height="3.90"/><rect x="300.38" y="24.00" width="0.6" height="3.90"/><rect x="301.56" y="24.00" width="0.6" height="3.90"/><rect x="303.00" y="24.68" width="3.36" height="0.6"/><rect x="303.00" y="25.65" width="3.36" height="0.6"/><rect x="303.00" y="26.74" width="3.36" height="0.6"/><rect x="303.20" y="25.36" width="0.6" height="2.54"/><rect x="304.38" y="24.00" width="0.6" height="3.90"/><rect x="305.56" y="24.00" width="0.6" height="3.90"/><rect x="307.00" y="26.74" width="3.36" height="0.6"/><rect x="307.20" y="25.36" width="0.6" height="2.54"/><rect x="309.56" y="25.36" width="0.6" height="2.54"/></g><g fill="rgb(225,225,225)" opacity="0.72"><rect x="711.06" y="28.70" width="2.47" height="0.6"/><rect x="710.23" y="27.20" width="0.6" height="3.60"/><rect x="711.46" y="27.20" width="0.6" height="3.60"/><rect x="712.70" y="27.20" width="0.6" height="3.60"/><rect x="714.20" y="28.70" width="3.53" height="0.6"/><rect x="714.20" y="29.71" width="3.53" height="0.6"/><rect x="714.43" y="27.20" width="0.6" height="3.60"/><rect x="716.90" y="27.20" width="0.6" height="3.60"/><rect x="718.40" y="28.70" width="3.53" height="0.6"/><rect x="718.63" y="27.20" width="0.6" height="3.60"/><rect x="719.86" y="27.20" width="0.6" height="3.60"/><rect x="722.60" y="27.80" width="3.53" height="0.6"/><rect x="723.66" y="28.70" width="2.47" height="0.6"/><rect x="724.06" y="27.20" width="0.6" height="3.60"/></g><g fill="rgb(235,235,235)" opacity="0.90"><rect x="728.50" y="34.30" width="3.53" height="0.6"/><rect x="728.73" y="33.60" width="0.6" height="4.00"/><rect x="731.20" y="33.60" width="0.6" height="4.00"/><rect x="732.70" y="34.30" width="3.53" height="0.6"/><rect x="733.76" y="35.30" width="2.47" height="0.6"/><rect x="734.16" y="33.60" width="0.6" height="4.00"/><rect x="736.90" y="36.42" width="3.53" height="0.6"/><rect x="737.13" y="33.60" width="0.6" height="4.00"/><rect x="738.36" y="33.60" width="0.6" height="4.00"/><rect x="739.60" y="33.60" width="0.6" height="4.00"/><rect x="741.10" y="34.30" width="3.53" height="0.6"/><rect x="741.10" y="35.30" width="3.53" height="0.6"/><rect x="741.10" y="36.42" width="3.53" height="0.6"/><rect x="741.33" y="35.00" width="0.6" height="2.60"/><rect x="742.56" y="33.60" width="0.6" height="4.00"/><rect x="745.30" y="35.30" width="3.53" height="0.6"/><rect x="745.53" y="35.00" width="0.6" height="2.60"/><rect x="748.00" y="33.60" width="0.6" height="4.00"/><rect x="750.56" y="34.30" width="2.47" height="0.6"/><rect x="749.50" y="35.30" width="3.53" height="0.6"/><rect x="749.50" y="36.42" width="3.53" height="0.6"/><rect x="749.73" y="33.60" width="0.6" height="4.00"/></g><g fill="rgb(235,235,235)" opacity="0.90"><rect x="729.56" y="43.37" width="2.47" height="0.6"/><rect x="728.50" y="44.49" width="3.53" height="0.6"/><rect x="728.73" y="41.67" width="0.6" height="4.00"/><rect x="731.20" y="41.67" width="0.6" height="4.00"/><rect x="733.76" y="43.37" width="2.47" height="0.6"/><rect x="733.76" y="44.49" width="2.47" height="0.6"/><rect x="734.16" y="41.67" width="0.6" height="4.00"/><rect x="737.96" y="42.37" width="2.47" height="0.6"/><rect x="737.13" y="43.07" width="0.6" height="2.60"/><rect x="738.36" y="41.67" width="0.6" height="4.00"/><rect x="742.16" y="43.37" width="2.47" height="0.6"/><rect x="741.33" y="41.67" width="0.6" height="4.00"/><rect x="742.56" y="41.67" width="0.6" height="4.00"/><rect x="745.30" y="42.37" width="3.53" height="0.6"/><rect x="745.30" y="43.37" width="3.53" height="0.6"/><rect x="746.76" y="43.07" width="0.6" height="2.60"/><rect x="749.50" y="42.37" width="3.53" height="0.6"/><rect x="749.50" y="43.37" width="3.53" height="0.6"/><rect x="749.50" y="44.49" width="3.53" height="0.6"/><rect x="750.96" y="41.67" width="0.6" height="4.00"/></g><g fill="rgb(235,235,235)" opacity="0.90"><rect x="729.56" y="51.44" width="2.47" height="0.6"/><rect x="728.73" y="49.74" width="0.6" height="4.00"/><rect x="729.96" y="49.74" width="0.6" height="4.00"/><rect x="733.76" y="50.44" width="2.47" height="0.6"/><rect x="732.70" y="51.44" width="3.53" height="0.6"/><rect x="733.76" y="52.56" width="2.47" height="0.6"/><rect x="732.93" y="49.74" width="0.6" height="4.00"/><rect x="734.16" y="49.74" width="0.6" height="4.00"/><rect x="735.40" y="49.74" width="0.6" height="4.00"/><rect x="736.90" y="50.44" width="3.53" height="0.6"/><rect x="736.90" y="51.44" width="3.53" height="0.6"/><rect x="736.90" y="52.56" width="3.53" height="0.6"/><rect x="737.13" y="49.74" width="0.6" height="4.00"/><rect x="738.36" y="51.14" width="0.6" height="2.60"/><rect x="741.10" y="50.44" width="3.53" height="0.6"/><rect x="741.10" y="52.56" width="3.53" height="0.6"/><rect x="741.33" y="49.74" width="0.6" height="4.00"/></g><g fill="rgb(235,235,235)" opacity="0.90"><rect x="728.50" y="58.51" width="3.53" height="0.6"/><rect x="728.50" y="60.63" width="3.53" height="0.6"/><rect x="728.73" y="59.21" width="0.6" height="2.60"/><rect x="731.20" y="57.81" width="0.6" height="4.00"/><rect x="732.70" y="58.51" width="3.53" height="0.6"/><rect x="733.76" y="59.51" width="2.47" height="0.6"/><rect x="732.70" y="60.63" width="3.53" height="0.6"/><rect x="732.93" y="59.21" width="0.6" height="2.60"/><rect x="734.16" y="59.21" width="0.6" height="2.60"/><rect x="735.40" y="59.21" width="0.6" height="2.60"/><rect x="736.90" y="59.51" width="3.53" height="0.6"/><rect x="737.13" y="57.81" width="0.6" height="4.00"/><rect x="739.60" y="57.81" width="0.6" height="4.00"/><rect x="742.16" y="58.51" width="2.47" height="0.6"/><rect x="741.10" y="59.51" width="3.53" height="0.6"/><rect x="742.56" y="57.81" width="0.6" height="4.00"/></g><g fill="rgb(235,235,235)" opacity="0.90"><rect x="728.50" y="66.58" width="3.53" height="0.6"/><rect x="728.50" y="67.58" width="3.53" height="0.6"/><rect x="729.56" y="68.70" width="2.47" height="0.6"/><rect x="728.73" y="65.88" width="0.6" height="4.00"/><rect x="729.96" y="65.88" width="0.6" height="4.00"/><rect x="731.20" y="67.28" width="0.6" height="2.60"/><rect x="732.70" y="66.58" width="3.53" height="0.6"/><rect x="732.93" y="65.88" width="0.6" height="4.00"/><rect x="735.40" y="65.88" width="0.6" height="4.00"/><rect x="736.90" y="66.58" width="3.53" height="0.6"/><rect x="736.90" y="67.58" width="3.53" height="0.6"/><rect x="738.36" y="65.88" width="0.6" height="4.00"/><rect x="742.16" y="66.58" width="2.47" height="0.6"/><rect x="742.16" y="67.58" width="2.47" height="0.6"/><rect x="741.33" y="65.88" width="0.6" height="4.00"/><rect x="742.56" y="65.88" width="0.6" height="4.00"/></g><g fill="rgb(235,235,235)" opacity="0.90"><rect x="728.73" y="73.95" width="0.6" height="4.00"/><rect x="729.96" y="73.95" width="0.6" height="4.00"/><rect x="731.20" y="73.95" width="0.6" height="4.00"/><rect x="732.70" y="75.65" width="3.53" height="0.6"/><rect x="732.70" y="76.77" width="3.53" height="0.6"/><rect x="732.93" y="73.95" width="0.6" height="4.00"/><rect x="737.96" y="76.77" width="2.47" height="0.6"/><rect x="737.13" y="75.35" width="0.6" height="2.60"/><rect x="739.60" y="75.35" width="0.6" height="2.60"/><rect x="741.10" y="74.65" width="3.53" height="0.6"/><rect x="742.16" y="76.77" width="2.47" height="0.6"/><rect x="741.33" y="75.35" width="0.6" height="2.60"/><rect x="743.80" y="73.95" width="0.6" height="4.00"/><rect x="746.36" y="74.65" width="2.47" height="0.6"/><rect x="745.30" y="75.65" width="3.53" height="0.6"/><rect x="746.76" y="75.35" width="0.6" height="2.60"/><rect x="749.50" y="74.65" width="3.53" height="0.6"/><rect x="750.56" y="75.65" width="2.47" height="0.6"/><rect x="749.50" y="76.77" width="3.53" height="0.6"/><rect x="749.73" y="73.95" width="0.6" height="4.00"/><rect x="750.96" y="73.95" width="0.6" height="4.00"/></g><g fill="rgb(235,235,235)" opacity="0.90"><rect x="728.50" y="82.72" width="3.53" height="0.6"/><rect x="728.50" y="83.72" width="3.53" height="0.6"/><rect x="728.50" y="84.84" width="3.53" height="0.6"/><rect x="729.96" y="82.02" width="0.6" height="4.00"/><rect x="732.70" y="82.72" width="3.53" height="0.6"/><rect x="732.70" y="83.72" width="3.53" height="0.6"/><rect x="734.16" y="82.02" width="0.6" height="4.00"/><rect x="736.90" y="82.72" width="3.53" height="0.6"/><rect x="736.90" y="83.72" width="3.53" height="0.6"/><rect x="737.96" y="84.84" width="2.47" height="0.6"/><rect x="737.13" y="82.02" width="0.6" height="4.00"/><rect x="738.36" y="82.02" width="0.6" height="4.00"/><rect x="739.60" y="82.02" width="0.6" height="4.00"/><rect x="741.10" y="83.72" width="3.53" height="0.6"/><rect x="741.10" y="84.84" width="3.53" height="0.6"/><rect x="741.33" y="83.42" width="0.6" height="2.60"/><rect x="743.80" y="82.02" width="0.6" height="4.00"/><rect x="745.30" y="82.72" width="3.53" height="0.6"/><rect x="745.30" y="84.84" width="3.53" height="0.6"/><rect x="746.76" y="82.02" width="0.6" height="4.00"/><rect x="748.00" y="82.02" width="0.6" height="4.00"/><rect x="749.50" y="82.72" width="3.53" height="0.6"/><rect x="749.50" y="84.84" width="3.53" height="0.6"/><rect x="750.96" y="82.02" width="0.6" height="4.00"/><rect x="752.20" y="83.42" width="0.6" height="2.60"/><rect x="753.70" y="82.72" width="3.53" height="0.6"/><rect x="753.70" y="84.84" width="3.53" height="0.6"/><rect x="753.93" y="82.02" width="0.6" height="4.00"/><rect x="758.96" y="82.72" width="2.47" height="0.6"/><rect x="757.90" y="83.72" width="3.53" height="0.6"/><rect x="757.90" y="84.84" width="3.53" height="0.6"/><rect x="758.13" y="83.42" width="0.6" height="2.60"/><rect x="760.60" y="83.42" width="0.6" height="2.60"/></g><g fill="rgb(235,235,235)" opacity="0.90"><rect x="728.50" y="90.79" width="3.53" height="0.6"/><rect x="728.50" y="91.79" width="3.53" height="0.6"/><rect x="729.96" y="90.09" width="0.6" height="4.00"/><rect x="732.70" y="90.79" width="3.53" height="0.6"/><rect x="732.70" y="91.79" width="3.53" height="0.6"/><rect x="734.16" y="90.09" width="0.6" height="4.00"/><rect x="736.90" y="90.79" width="3.53" height="0.6"/><rect x="737.96" y="91.79" width="2.47" height="0.6"/><rect x="737.96" y="92.91" width="2.47" height="0.6"/><rect x="738.36" y="90.09" width="0.6" height="4.00"/><rect x="739.60" y="90.09" width="0.6" height="4.00"/><rect x="742.16" y="90.79" width="2.47" height="0.6"/><rect x="741.10" y="92.91" width="3.53" height="0.6"/><rect x="741.33" y="90.09" width="0.6" height="4.00"/><rect x="742.56" y="91.49" width="0.6" height="2.60"/><rect x="745.30" y="91.79" width="3.53" height="0.6"/><rect x="745.30" y="92.91" width="3.53" height="0.6"/><rect x="745.53" y="90.09" width="0.6" height="4.00"/><rect x="746.76" y="90.09" width="0.6" height="4.00"/><rect x="748.00" y="90.09" width="0.6" height="4.00"/><rect x="749.50" y="92.91" width="3.53" height="0.6"/><rect x="749.73" y="90.09" width="0.6" height="4.00"/><rect x="752.20" y="90.09" width="0.6" height="4.00"/><rect x="753.70" y="90.79" width="3.53" height="0.6"/><rect x="754.76" y="91.79" width="2.47" height="0.6"/><rect x="754.76" y="92.91" width="2.47" height="0.6"/><rect x="755.16" y="91.49" width="0.6" height="2.60"/><rect x="758.13" y="90.09" width="0.6" height="4.00"/><rect x="759.36" y="90.09" width="0.6" height="4.00"/><rect x="760.60" y="90.09" width="0.6" height="4.00"/></g><g fill="rgb(235,235,235)" opacity="0.90"><rect x="728.50" y="98.86" width="3.53" height="0.6"/><rect x="728.50" y="99.86" width="3.53" height="0.6"/><rect x="729.96" y="98.16" width="0.6" height="4.00"/><rect x="733.76" y="98.86" width="2.47" height="0.6"/><rect x="732.70" y="99.86" width="3.53" height="0.6"/><rect x="734.16" y="98.16" width="0.6" height="4.00"/><rect x="735.40" y="98.16" width="0.6" height="4.00"/><rect x="737.96" y="99.86" width="2.47" height="0.6"/><rect x="737.13" y="99.56" width="0.6" height="2.60"/><rect x="739.60" y="98.16" width="0.6" height="4.00"/><rect x="741.10" y="99.86" width="3.53" height="0.6"/><rect x="742.56" y="98.16" width="0.6" height="4.00"/><rect x="743.80" y="98.16" width="0.6" height="4.00"/><rect x="745.30" y="98.86" width="3.53" height="0.6"/><rect x="746.76" y="98.16" width="0.6" height="4.00"/><rect x="748.00" y="98.16" width="0.6" height="4.00"/><rect x="750.56" y="100.98" width="2.47" height="0.6"/><rect x="749.73" y="98.16" width="0.6" height="4.00"/><rect x="750.96" y="98.16" width="0.6" height="4.00"/><rect x="752.20" y="99.56" width="0.6" height="2.60"/></g><g fill="rgb(235,235,235)" opacity="0.90"><rect x="728.50" y="106.93" width="3.53" height="0.6"/><rect x="728.50" y="107.93" width="3.53" height="0.6"/><rect x="728.50" y="109.05" width="3.53" height="0.6"/><rect x="728.73" y="107.63" width="0.6" height="2.60"/><rect x="729.96" y="106.23" width="0.6" height="4.00"/><rect x="732.70" y="106.93" width="3.53" height="0.6"/><rect x="732.70" y="107.93" width="3.53" height="0.6"/><rect x="733.76" y="109.05" width="2.47" height="0.6"/><rect x="734.16" y="107.63" width="0.6" height="2.60"/><rect x="737.96" y="109.05" width="2.47" height="0.6"/><rect x="737.13" y="106.23" width="0.6" height="4.00"/><rect x="738.36" y="106.23" width="0.6" height="4.00"/><rect x="739.60" y="106.23" width="0.6" height="4.00"/><rect x="742.16" y="106.93" width="2.47" height="0.6"/><rect x="741.10" y="107.93" width="3.53" height="0.6"/><rect x="741.10" y="109.05" width="3.53" height="0.6"/><rect x="741.33" y="107.63" width="0.6" height="2.60"/><rect x="742.56" y="107.63" width="0.6" height="2.60"/><rect x="743.80" y="106.23" width="0.6" height="4.00"/></g><g fill="rgb(235,235,235)" opacity="0.90"><rect x="728.50" y="116.00" width="3.53" height="0.6"/><rect x="728.50" y="117.12" width="3.53" height="0.6"/><rect x="728.73" y="114.30" width="0.6" height="4.00"/><rect x="731.20" y="115.70" width="0.6" height="2.60"/><rect x="732.70" y="115.00" width="3.53" height="0.6"/><rect x="732.93" y="115.70" width="0.6" height="2.60"/><rect x="735.40" y="114.30" width="0.6" height="4.00"/><rect x="736.90" y="115.00" width="3.53" height="0.6"/><rect x="737.13" y="114.30" width="0.6" height="4.00"/><rect x="738.36" y="114.30" width="0.6" height="4.00"/><rect x="739.60" y="115.70" width="0.6" height="2.60"/><rect x="741.10" y="115.00" width="3.53" height="0.6"/><rect x="742.16" y="117.12" width="2.47" height="0.6"/><rect x="741.33" y="114.30" width="0.6" height="4.00"/><rect x="743.80" y="115.70" width="0.6" height="2.60"/></g><g fill="rgb(235,235,235)" opacity="0.90"><rect x="728.50" y="125.19" width="3.53" height="0.6"/><rect x="728.73" y="123.77" width="0.6" height="2.60"/><rect x="731.20" y="122.37" width="0.6" height="4.00"/><rect x="732.70" y="123.07" width="3.53" height="0.6"/><rect x="732.70" y="124.07" width="3.53" height="0.6"/><rect x="734.16" y="122.37" width="0.6" height="4.00"/><rect x="737.96" y="124.07" width="2.47" height="0.6"/><rect x="736.90" y="125.19" width="3.53" height="0.6"/><rect x="739.60" y="122.37" width="0.6" height="4.00"/><rect x="741.10" y="123.07" width="3.53" height="0.6"/><rect x="742.16" y="124.07" width="2.47" height="0.6"/><rect x="742.56" y="122.37" width="0.6" height="4.00"/></g><g fill="rgb(235,235,235)" opacity="0.90"><rect x="729.56" y="133.26" width="2.47" height="0.6"/><rect x="728.73" y="130.44" width="0.6" height="4.00"/><rect x="729.96" y="130.44" width="0.6" height="4.00"/><rect x="731.20" y="131.84" width="0.6" height="2.60"/><rect x="732.70" y="131.14" width="3.53" height="0.6"/><rect x="732.70" y="132.14" width="3.53" height="0.6"/><rect x="733.76" y="133.26" width="2.47" height="0.6"/><rect x="732.93" y="130.44" width="0.6" height="4.00"/><rect x="734.16" y="130.44" width="0.6" height="4.00"/><rect x="735.40" y="131.84" width="0.6" height="2.60"/><rect x="737.96" y="131.14" width="2.47" height="0.6"/><rect x="737.96" y="132.14" width="2.47" height="0.6"/><rect x="736.90" y="133.26" width="3.53" height="0.6"/><rect x="738.36" y="130.44" width="0.6" height="4.00"/><rect x="739.60" y="130.44" width="0.6" height="4.00"/><rect x="741.10" y="132.14" width="3.53" height="0.6"/><rect x="742.16" y="133.26" width="2.47" height="0.6"/><rect x="742.56" y="130.44" width="0.6" height="4.00"/><rect x="743.80" y="130.44" width="0.6" height="4.00"/></g><g fill="rgb(235,235,235)" opacity="0.90"><rect x="728.50" y="139.21" width="3.53" height="0.6"/><rect x="728.50" y="140.21" width="3.53" height="0.6"/><rect x="729.96" y="138.51" width="0.6" height="4.00"/><rect x="732.70" y="139.21" width="3.53" height="0.6"/><rect x="732.70" y="140.21" width="3.53" height="0.6"/><rect x="734.16" y="138.51" width="0.6" height="4.00"/><rect x="736.90" y="140.21" width="3.53" height="0.6"/><rect x="737.13" y="139.91" width="0.6" height="2.60"/><rect x="738.36" y="138.51" width="0.6" height="4.00"/><rect x="739.60" y="138.51" width="0.6" height="4.00"/><rect x="741.10" y="139.21" width="3.53" height="0.6"/><rect x="741.10" y="140.21" width="3.53" height="0.6"/><rect x="742.56" y="139.91" width="0.6" height="2.60"/><rect x="745.30" y="140.21" width="3.53" height="0.6"/><rect x="745.53" y="138.51" width="0.6" height="4.00"/><rect x="746.76" y="139.91" width="0.6" height="2.60"/><rect x="748.00" y="139.91" width="0.6" height="2.60"/></g><g fill="rgb(235,235,235)" opacity="0.90"><rect x="728.50" y="147.28" width="3.53" height="0.6"/><rect x="729.56" y="149.40" width="2.47" height="0.6"/><rect x="728.73" y="147.98" width="0.6" height="2.60"/><rect x="729.96" y="146.58" width="0.6" height="4.00"/><rect x="733.76" y="147.28" width="2.47" height="0.6"/><rect x="732.70" y="148.28" width="3.53" height="0.6"/><rect x="734.16" y="146.58" width="0.6" height="4.00"/><rect x="737.96" y="147.28" width="2.47" height="0.6"/><rect x="737.13" y="146.58" width="0.6" height="4.00"/><rect x="738.36" y="147.98" width="0.6" height="2.60"/><rect x="739.60" y="146.58" width="0.6" height="4.00"/><rect x="741.10" y="147.28" width="3.53" height="0.6"/><rect x="741.10" y="149.40" width="3.53" height="0.6"/><rect x="743.80" y="146.58" width="0.6" height="4.00"/></g><g fill="rgb(235,235,235)" opacity="0.90"><rect x="728.50" y="155.35" width="3.53" height="0.6"/><rect x="728.50" y="156.35" width="3.53" height="0.6"/><rect x="729.96" y="156.05" width="0.6" height="2.60"/><rect x="732.70" y="157.47" width="3.53" height="0.6"/><rect x="734.16" y="154.65" width="0.6" height="4.00"/><rect x="735.40" y="154.65" width="0.6" height="4.00"/><rect x="736.90" y="155.35" width="3.53" height="0.6"/><rect x="736.90" y="156.35" width="3.53" height="0.6"/><rect x="737.13" y="156.05" width="0.6" height="2.60"/><rect x="738.36" y="154.65" width="0.6" height="4.00"/><rect x="739.60" y="156.05" width="0.6" height="2.60"/><rect x="741.10" y="156.35" width="3.53" height="0.6"/><rect x="741.10" y="157.47" width="3.53" height="0.6"/><rect x="741.33" y="154.65" width="0.6" height="4.00"/><rect x="743.80" y="154.65" width="0.6" height="4.00"/></g><g fill="rgb(235,235,235)" opacity="0.90"><rect x="729.56" y="163.42" width="2.47" height="0.6"/><rect x="728.50" y="164.42" width="3.53" height="0.6"/><rect x="728.73" y="164.12" width="0.6" height="2.60"/><rect x="729.96" y="162.72" width="0.6" height="4.00"/><rect x="732.70" y="163.42" width="3.53" height="0.6"/><rect x="732.70" y="164.42" width="3.53" height="0.6"/><rect x="733.76" y="165.54" width="2.47" height="0.6"/><rect x="732.93" y="162.72" width="0.6" height="4.00"/><rect x="734.16" y="162.72" width="0.6" height="4.00"/><rect x="735.40" y="162.72" width="0.6" height="4.00"/><rect x="737.96" y="163.42" width="2.47" height="0.6"/><rect x="737.13" y="164.12" width="0.6" height="2.60"/><rect x="739.60" y="164.12" width="0.6" height="2.60"/><rect x="742.16" y="165.54" width="2.47" height="0.6"/><rect x="741.33" y="164.12" width="0.6" height="2.60"/><rect x="742.56" y="164.12" width="0.6" height="2.60"/><rect x="743.80" y="162.72" width="0.6" height="4.00"/></g><g fill="rgb(235,235,235)" opacity="0.90"><rect x="728.50" y="172.49" width="3.53" height="0.6"/><rect x="728.50" y="173.61" width="3.53" height="0.6"/><rect x="729.96" y="170.79" width="0.6" height="4.00"/><rect x="731.20" y="172.19" width="0.6" height="2.60"/><rect x="732.70" y="171.49" width="3.53" height="0.6"/><rect x="732.70" y="173.61" width="3.53" height="0.6"/><rect x="732.93" y="170.79" width="0.6" height="4.00"/><rect x="737.96" y="171.49" width="2.47" height="0.6"/><rect x="736.90" y="172.49" width="3.53" height="0.6"/><rect x="737.96" y="173.61" width="2.47" height="0.6"/><rect x="739.60" y="170.79" width="0.6" height="4.00"/><rect x="741.10" y="171.49" width="3.53" height="0.6"/><rect x="741.10" y="172.49" width="3.53" height="0.6"/><rect x="742.56" y="170.79" width="0.6" height="4.00"/></g><g fill="rgb(235,235,235)" opacity="0.90"><rect x="729.56" y="179.56" width="2.47" height="0.6"/><rect x="728.50" y="181.68" width="3.53" height="0.6"/><rect x="728.73" y="178.86" width="0.6" height="4.00"/><rect x="732.70" y="179.56" width="3.53" height="0.6"/><rect x="732.70" y="181.68" width="3.53" height="0.6"/><rect x="732.93" y="178.86" width="0.6" height="4.00"/><rect x="734.16" y="180.26" width="0.6" height="2.60"/><rect x="736.90" y="179.56" width="3.53" height="0.6"/><rect x="736.90" y="180.56" width="3.53" height="0.6"/><rect x="737.13" y="180.26" width="0.6" height="2.60"/><rect x="738.36" y="178.86" width="0.6" height="4.00"/><rect x="741.10" y="179.56" width="3.53" height="0.6"/><rect x="741.10" y="180.56" width="3.53" height="0.6"/><rect x="741.33" y="178.86" width="0.6" height="4.00"/><rect x="742.56" y="178.86" width="0.6" height="4.00"/><rect x="743.80" y="180.26" width="0.6" height="2.60"/></g><g fill="rgb(235,235,235)" opacity="0.90"><rect x="728.50" y="187.63" width="3.53" height="0.6"/><rect x="728.50" y="188.63" width="3.53" height="0.6"/><rect x="729.96" y="186.93" width="0.6" height="4.00"/><rect x="732.70" y="187.63" width="3.53" height="0.6"/><rect x="732.93" y="188.33" width="0.6" height="2.60"/><rect x="735.40" y="188.33" width="0.6" height="2.60"/><rect x="736.90" y="188.63" width="3.53" height="0.6"/><rect x="738.36" y="186.93" width="0.6" height="4.00"/><rect x="739.60" y="188.33" width="0.6" height="2.60"/><rect x="741.10" y="188.63" width="3.53" height="0.6"/><rect x="741.33" y="186.93" width="0.6" height="4.00"/><rect x="742.56" y="188.33" width="0.6" height="2.60"/><rect x="745.30" y="187.63" width="3.53" height="0.6"/><rect x="745.30" y="188.63" width="3.53" height="0.6"/><rect x="746.76" y="186.93" width="0.6" height="4.00"/></g><g fill="rgb(235,235,235)" opacity="0.90"><rect x="728.50" y="195.70" width="3.53" height="0.6"/><rect x="728.50" y="196.70" width="3.53" height="0.6"/><rect x="729.96" y="195.00" width="0.6" height="4.00"/><rect x="733.76" y="197.82" width="2.47" height="0.6"/><rect x="732.93" y="195.00" width="0.6" height="4.00"/><rect x="734.16" y="195.00" width="0.6" height="4.00"/><rect x="736.90" y="195.70" width="3.53" height="0.6"/><rect x="736.90" y="197.82" width="3.53" height="0.6"/><rect x="737.13" y="195.00" width="0.6" height="4.00"/><rect x="738.36" y="195.00" width="0.6" height="4.00"/><rect x="741.10" y="196.70" width="3.53" height="0.6"/><rect x="741.33" y="195.00" width="0.6" height="4.00"/><rect x="742.56" y="195.00" width="0.6" height="4.00"/><rect x="743.80" y="195.00" width="0.6" height="4.00"/><rect x="745.30" y="195.70" width="3.53" height="0.6"/><rect x="745.30" y="196.70" width="3.53" height="0.6"/><rect x="746.76" y="195.00" width="0.6" height="4.00"/></g><g fill="rgb(235,235,235)" opacity="0.90"><rect x="728.50" y="203.77" width="3.53" height="0.6"/><rect x="729.56" y="205.89" width="2.47" height="0.6"/><rect x="728.73" y="203.07" width="0.6" height="4.00"/><rect x="729.96" y="204.47" width="0.6" height="2.60"/><rect x="733.76" y="203.77" width="2.47" height="0.6"/><rect x="732.93" y="203.07" width="0.6" height="4.00"/><rect x="734.16" y="203.07" width="0.6" height="4.00"/><rect x="735.40" y="203.07" width="0.6" height="4.00"/><rect x="736.90" y="203.77" width="3.53" height="0.6"/><rect x="737.96" y="204.77" width="2.47" height="0.6"/><rect x="737.13" y="204.47" width="0.6" height="2.60"/><rect x="738.36" y="203.07" width="0.6" height="4.00"/><rect x="742.16" y="203.77" width="2.47" height="0.6"/><rect x="741.10" y="204.77" width="3.53" height="0.6"/><rect x="741.10" y="205.89" width="3.53" height="0.6"/><rect x="741.33" y="203.07" width="0.6" height="4.00"/><rect x="743.80" y="203.07" width="0.6" height="4.00"/></g><g fill="rgb(235,235,235)" opacity="0.90"><rect x="728.50" y="211.84" width="3.53" height="0.6"/><rect x="728.73" y="211.14" width="0.6" height="4.00"/><rect x="729.96" y="211.14" width="0.6" height="4.00"/><rect x="731.20" y="211.14" width="0.6" height="4.00"/><rect x="732.70" y="211.84" width="3.53" height="0.6"/><rect x="733.76" y="212.84" width="2.47" height="0.6"/><rect x="734.16" y="211.14" width="0.6" height="4.00"/><rect x="736.90" y="211.84" width="3.53" height="0.6"/><rect x="736.90" y="212.84" width="3.53" height="0.6"/><rect x="736.90" y="213.96" width="3.53" height="0.6"/><rect x="738.36" y="211.14" width="0.6" height="4.00"/><rect x="741.10" y="212.84" width="3.53" height="0.6"/><rect x="741.10" y="213.96" width="3.53" height="0.6"/><rect x="741.33" y="211.14" width="0.6" height="4.00"/><rect x="743.80" y="211.14" width="0.6" height="4.00"/></g><g fill="rgb(235,235,235)" opacity="0.90"><rect x="728.50" y="220.91" width="3.53" height="0.6"/><rect x="729.56" y="222.03" width="2.47" height="0.6"/><rect x="731.20" y="219.21" width="0.6" height="4.00"/><rect x="733.76" y="219.91" width="2.47" height="0.6"/><rect x="733.76" y="220.91" width="2.47" height="0.6"/><rect x="734.16" y="220.61" width="0.6" height="2.60"/><rect x="736.90" y="220.91" width="3.53" height="0.6"/><rect x="736.90" y="222.03" width="3.53" height="0.6"/><rect x="737.13" y="219.21" width="0.6" height="4.00"/><rect x="738.36" y="219.21" width="0.6" height="4.00"/><rect x="741.10" y="222.03" width="3.53" height="0.6"/><rect x="742.56" y="220.61" width="0.6" height="2.60"/><rect x="743.80" y="220.61" width="0.6" height="2.60"/><rect x="745.30" y="219.91" width="3.53" height="0.6"/><rect x="745.30" y="222.03" width="3.53" height="0.6"/><rect x="746.76" y="219.21" width="0.6" height="4.00"/><rect x="748.00" y="219.21" width="0.6" height="4.00"/></g><g fill="rgb(235,235,235)" opacity="0.90"><rect x="729.56" y="227.98" width="2.47" height="0.6"/><rect x="728.50" y="228.98" width="3.53" height="0.6"/><rect x="728.73" y="228.68" width="0.6" height="2.60"/><rect x="732.70" y="227.98" width="3.53" height="0.6"/><rect x="732.70" y="228.98" width="3.53" height="0.6"/><rect x="733.76" y="230.10" width="2.47" height="0.6"/><rect x="734.16" y="227.28" width="0.6" height="4.00"/><rect x="735.40" y="227.28" width="0.6" height="4.00"/><rect x="736.90" y="230.10" width="3.53" height="0.6"/><rect x="738.36" y="227.28" width="0.6" height="4.00"/><rect x="739.60" y="227.28" width="0.6" height="4.00"/><rect x="742.16" y="227.98" width="2.47" height="0.6"/><rect x="741.10" y="230.10" width="3.53" height="0.6"/><rect x="742.56" y="227.28" width="0.6" height="4.00"/><rect x="743.80" y="227.28" width="0.6" height="4.00"/><rect x="746.36" y="230.10" width="2.47" height="0.6"/><rect x="745.53" y="227.28" width="0.6" height="4.00"/><rect x="748.00" y="228.68" width="0.6" height="2.60"/></g><g fill="rgb(235,235,235)" opacity="0.90"><rect x="728.50" y="236.05" width="3.53" height="0.6"/><rect x="728.50" y="237.05" width="3.53" height="0.6"/><rect x="728.50" y="238.17" width="3.53" height="0.6"/><rect x="731.20" y="236.75" width="0.6" height="2.60"/><rect x="732.70" y="236.05" width="3.53" height="0.6"/><rect x="733.76" y="238.17" width="2.47" height="0.6"/><rect x="732.93" y="235.35" width="0.6" height="4.00"/><rect x="734.16" y="235.35" width="0.6" height="4.00"/><rect x="736.90" y="236.05" width="3.53" height="0.6"/><rect x="736.90" y="237.05" width="3.53" height="0.6"/><rect x="738.36" y="235.35" width="0.6" height="4.00"/><rect x="741.10" y="237.05" width="3.53" height="0.6"/><rect x="741.10" y="238.17" width="3.53" height="0.6"/><rect x="741.33" y="235.35" width="0.6" height="4.00"/><rect x="742.56" y="235.35" width="0.6" height="4.00"/><rect x="743.80" y="235.35" width="0.6" height="4.00"/></g><g fill="rgb(235,235,235)" opacity="0.90"><rect x="728.50" y="244.12" width="3.53" height="0.6"/><rect x="728.50" y="245.12" width="3.53" height="0.6"/><rect x="729.96" y="243.42" width="0.6" height="4.00"/><rect x="732.70" y="244.12" width="3.53" height="0.6"/><rect x="733.76" y="245.12" width="2.47" height="0.6"/><rect x="732.93" y="243.42" width="0.6" height="4.00"/><rect x="734.16" y="243.42" width="0.6" height="4.00"/><rect x="735.40" y="244.82" width="0.6" height="2.60"/><rect x="737.96" y="245.12" width="2.47" height="0.6"/><rect x="736.90" y="246.24" width="3.53" height="0.6"/><rect x="738.36" y="243.42" width="0.6" height="4.00"/><rect x="741.10" y="244.12" width="3.53" height="0.6"/><rect x="742.16" y="245.12" width="2.47" height="0.6"/><rect x="741.33" y="243.42" width="0.6" height="4.00"/><rect x="742.56" y="244.82" width="0.6" height="2.60"/></g><g fill="rgb(235,235,235)" opacity="0.90"><rect x="729.56" y="253.19" width="2.47" height="0.6"/><rect x="728.50" y="254.31" width="3.53" height="0.6"/><rect x="729.96" y="251.49" width="0.6" height="4.00"/><rect x="731.20" y="251.49" width="0.6" height="4.00"/><rect x="732.70" y="252.19" width="3.53" height="0.6"/><rect x="733.76" y="254.31" width="2.47" height="0.6"/><rect x="734.16" y="252.89" width="0.6" height="2.60"/><rect x="736.90" y="252.19" width="3.53" height="0.6"/><rect x="736.90" y="253.19" width="3.53" height="0.6"/><rect x="737.96" y="254.31" width="2.47" height="0.6"/><rect x="738.36" y="252.89" width="0.6" height="2.60"/><rect x="739.60" y="251.49" width="0.6" height="4.00"/><rect x="742.16" y="252.19" width="2.47" height="0.6"/><rect x="741.10" y="253.19" width="3.53" height="0.6"/><rect x="742.56" y="251.49" width="0.6" height="4.00"/></g><g fill="rgb(235,235,235)" opacity="0.90"><rect x="728.50" y="260.26" width="3.53" height="0.6"/><rect x="728.50" y="261.26" width="3.53" height="0.6"/><rect x="728.73" y="259.56" width="0.6" height="4.00"/><rect x="729.96" y="259.56" width="0.6" height="4.00"/><rect x="731.20" y="260.96" width="0.6" height="2.60"/><rect x="732.70" y="260.26" width="3.53" height="0.6"/><rect x="732.93" y="260.96" width="0.6" height="2.60"/><rect x="734.16" y="259.56" width="0.6" height="4.00"/><rect x="735.40" y="260.96" width="0.6" height="2.60"/><rect x="737.96" y="260.26" width="2.47" height="0.6"/><rect x="736.90" y="261.26" width="3.53" height="0.6"/><rect x="738.36" y="260.96" width="0.6" height="2.60"/><rect x="741.10" y="260.26" width="3.53" height="0.6"/><rect x="742.16" y="261.26" width="2.47" height="0.6"/><rect x="741.10" y="262.38" width="3.53" height="0.6"/><rect x="741.33" y="259.56" width="0.6" height="4.00"/><rect x="743.80" y="260.96" width="0.6" height="2.60"/></g><g fill="rgb(235,235,235)" opacity="0.90"><rect x="728.50" y="268.33" width="3.53" height="0.6"/><rect x="729.56" y="269.33" width="2.47" height="0.6"/><rect x="728.50" y="270.45" width="3.53" height="0.6"/><rect x="728.73" y="267.63" width="0.6" height="4.00"/><rect x="731.20" y="269.03" width="0.6" height="2.60"/><rect x="733.76" y="268.33" width="2.47" height="0.6"/><rect x="732.70" y="269.33" width="3.53" height="0.6"/><rect x="732.70" y="270.45" width="3.53" height="0.6"/><rect x="732.93" y="269.03" width="0.6" height="2.60"/><rect x="734.16" y="269.03" width="0.6" height="2.60"/><rect x="735.40" y="269.03" width="0.6" height="2.60"/></g><g fill="rgb(235,235,235)" opacity="0.90"><rect x="728.50" y="276.40" width="3.53" height="0.6"/><rect x="728.50" y="277.40" width="3.53" height="0.6"/><rect x="728.50" y="278.52" width="3.53" height="0.6"/><rect x="728.73" y="277.10" width="0.6" height="2.60"/><rect x="731.20" y="275.70" width="0.6" height="4.00"/><rect x="733.76" y="276.40" width="2.47" height="0.6"/><rect x="732.70" y="277.40" width="3.53" height="0.6"/><rect x="734.16" y="275.70" width="0.6" height="4.00"/></g><g fill="rgb(235,235,235)" opacity="0.90"><rect x="728.50" y="284.47" width="3.53" height="0.6"/><rect x="728.50" y="286.59" width="3.53" height="0.6"/><rect x="728.73" y="283.77" width="0.6" height="4.00"/><rect x="732.70" y="285.47" width="3.53" height="0.6"/><rect x="733.76" y="286.59" width="2.47" height="0.6"/><rect x="732.93" y="283.77" width="0.6" height="4.00"/><rect x="734.16" y="283.77" width="0.6" height="4.00"/><rect x="735.40" y="283.77" width="0.6" height="4.00"/><rect x="736.90" y="284.47" width="3.53" height="0.6"/><rect x="736.90" y="286.59" width="3.53" height="0.6"/><rect x="737.13" y="283.77" width="0.6" height="4.00"/><rect x="738.36" y="285.17" width="0.6" height="2.60"/><rect x="739.60" y="283.77" width="0.6" height="4.00"/><rect x="741.10" y="284.47" width="3.53" height="0.6"/><rect x="741.10" y="285.47" width="3.53" height="0.6"/><rect x="742.56" y="283.77" width="0.6" height="4.00"/></g><g fill="rgb(235,235,235)" opacity="0.90"><rect x="728.50" y="292.54" width="3.53" height="0.6"/><rect x="728.50" y="293.54" width="3.53" height="0.6"/><rect x="729.56" y="294.66" width="2.47" height="0.6"/><rect x="728.73" y="291.84" width="0.6" height="4.00"/><rect x="731.20" y="291.84" width="0.6" height="4.00"/><rect x="732.70" y="292.54" width="3.53" height="0.6"/><rect x="732.70" y="293.54" width="3.53" height="0.6"/><rect x="732.70" y="294.66" width="3.53" height="0.6"/><rect x="732.93" y="291.84" width="0.6" height="4.00"/><rect x="734.16" y="291.84" width="0.6" height="4.00"/><rect x="737.96" y="292.54" width="2.47" height="0.6"/><rect x="736.90" y="293.54" width="3.53" height="0.6"/><rect x="738.36" y="293.24" width="0.6" height="2.60"/><rect x="741.10" y="292.54" width="3.53" height="0.6"/><rect x="742.16" y="293.54" width="2.47" height="0.6"/><rect x="742.16" y="294.66" width="2.47" height="0.6"/><rect x="741.33" y="293.24" width="0.6" height="2.60"/><rect x="742.56" y="291.84" width="0.6" height="4.00"/></g><g fill="rgb(235,235,235)" opacity="0.90"><rect x="728.50" y="300.61" width="3.53" height="0.6"/><rect x="729.56" y="301.61" width="2.47" height="0.6"/><rect x="728.50" y="302.73" width="3.53" height="0.6"/><rect x="728.73" y="299.91" width="0.6" height="4.00"/><rect x="729.96" y="299.91" width="0.6" height="4.00"/><rect x="731.20" y="299.91" width="0.6" height="4.00"/><rect x="733.76" y="300.61" width="2.47" height="0.6"/><rect x="732.70" y="301.61" width="3.53" height="0.6"/><rect x="734.16" y="299.91" width="0.6" height="4.00"/><rect x="737.96" y="300.61" width="2.47" height="0.6"/><rect x="736.90" y="302.73" width="3.53" height="0.6"/><rect x="737.13" y="301.31" width="0.6" height="2.60"/><rect x="741.10" y="300.61" width="3.53" height="0.6"/><rect x="742.16" y="301.61" width="2.47" height="0.6"/><rect x="742.56" y="299.91" width="0.6" height="4.00"/></g><g fill="rgb(225,225,225)" opacity="0.72"><rect x="710.00" y="315.10" width="3.53" height="0.6"/><rect x="710.00" y="316.00" width="3.53" height="0.6"/><rect x="710.23" y="314.50" width="0.6" height="3.60"/><rect x="711.46" y="314.50" width="0.6" height="3.60"/><rect x="712.70" y="315.76" width="0.6" height="2.34"/><rect x="714.20" y="315.10" width="3.53" height="0.6"/><rect x="714.20" y="317.01" width="3.53" height="0.6"/><rect x="715.66" y="315.76" width="0.6" height="2.34"/></g><g fill="rgb(225,225,225)" opacity="0.87"><rect x="722.50" y="334.80" width="3.61" height="0.6"/><rect x="722.50" y="335.70" width="3.61" height="0.6"/><rect x="723.58" y="336.71" width="2.53" height="0.6"/><rect x="722.74" y="334.20" width="0.6" height="3.60"/><rect x="724.01" y="335.46" width="0.6" height="2.34"/><rect x="725.27" y="334.20" width="0.6" height="3.60"/></g><g fill="rgb(225,225,225)" opacity="0.87"><rect x="759.00" y="334.80" width="3.36" height="0.6"/><rect x="759.00" y="335.70" width="3.36" height="0.6"/><rect x="760.38" y="335.46" width="0.6" height="2.34"/><rect x="764.01" y="334.80" width="2.35" height="0.6"/><rect x="763.00" y="335.70" width="3.36" height="0.6"/><rect x="763.00" y="336.71" width="3.36" height="0.6"/><rect x="763.20" y="335.46" width="0.6" height="2.34"/><rect x="765.56" y="335.46" width="0.6" height="2.34"/></g><g fill="rgb(225,225,225)" opacity="0.87"><rect x="721.50" y="371.80" width="3.61" height="0.6"/><rect x="721.50" y="373.71" width="3.61" height="0.6"/><rect x="721.74" y="372.46" width="0.6" height="2.34"/></g><g fill="rgb(225,225,225)" opacity="0.87"><rect x="753.50" y="371.85" width="4.20" height="0.6"/><rect x="753.83" y="371.20" width="0.6" height="3.80"/><rect x="755.30" y="372.53" width="0.6" height="2.47"/><rect x="756.77" y="371.20" width="0.6" height="3.80"/><rect x="758.50" y="371.85" width="4.20" height="0.6"/><rect x="759.76" y="372.80" width="2.94" height="0.6"/><rect x="758.83" y="371.20" width="0.6" height="3.80"/><rect x="760.30" y="371.20" width="0.6" height="3.80"/></g><g fill="rgb(225,225,225)" opacity="1.00"><rect x="713.50" y="405.20" width="3.78" height="0.6"/><rect x="713.50" y="406.10" width="3.78" height="0.6"/><rect x="713.50" y="407.11" width="3.78" height="0.6"/><rect x="713.77" y="404.60" width="0.6" height="3.60"/><rect x="715.09" y="404.60" width="0.6" height="3.60"/><rect x="716.41" y="404.60" width="0.6" height="3.60"/><rect x="718.00" y="405.20" width="3.78" height="0.6"/><rect x="719.13" y="407.11" width="2.65" height="0.6"/><rect x="718.27" y="404.60" width="0.6" height="3.60"/><rect x="719.59" y="404.60" width="0.6" height="3.60"/><rect x="720.91" y="404.60" width="0.6" height="3.60"/><rect x="722.50" y="405.20" width="3.78" height="0.6"/><rect x="722.50" y="406.10" width="3.78" height="0.6"/><rect x="722.50" y="407.11" width="3.78" height="0.6"/><rect x="724.09" y="405.86" width="0.6" height="2.34"/><rect x="728.13" y="405.20" width="2.65" height="0.6"/><rect x="727.00" y="406.10" width="3.78" height="0.6"/><rect x="727.00" y="407.11" width="3.78" height="0.6"/><rect x="729.91" y="405.86" width="0.6" height="2.34"/></g><g fill="rgb(225,225,225)" opacity="1.00"><rect x="769.50" y="405.20" width="3.36" height="0.6"/><rect x="770.51" y="406.10" width="2.35" height="0.6"/><rect x="769.50" y="407.11" width="3.36" height="0.6"/><rect x="769.70" y="404.60" width="0.6" height="3.60"/><rect x="770.88" y="404.60" width="0.6" height="3.60"/><rect x="772.06" y="405.86" width="0.6" height="2.34"/><rect x="773.50" y="405.20" width="3.36" height="0.6"/><rect x="773.50" y="406.10" width="3.36" height="0.6"/><rect x="773.50" y="407.11" width="3.36" height="0.6"/><rect x="773.70" y="405.86" width="0.6" height="2.34"/><rect x="776.06" y="404.60" width="0.6" height="3.60"/></g><g fill="rgb(225,225,225)" opacity="0.72"><rect x="710.00" y="414.80" width="3.53" height="0.6"/><rect x="710.00" y="415.70" width="3.53" height="0.6"/><rect x="710.00" y="416.71" width="3.53" height="0.6"/><rect x="715.26" y="414.80" width="2.47" height="0.6"/><rect x="715.26" y="415.70" width="2.47" height="0.6"/><rect x="715.26" y="416.71" width="2.47" height="0.6"/><rect x="714.43" y="414.20" width="0.6" height="3.60"/><rect x="716.90" y="414.20" width="0.6" height="3.60"/></g><g fill="rgb(225,225,225)" opacity="0.87"><rect x="723.50" y="435.20" width="3.61" height="0.6"/><rect x="724.58" y="436.10" width="2.53" height="0.6"/><rect x="723.50" y="437.11" width="3.61" height="0.6"/><rect x="723.74" y="435.86" width="0.6" height="2.34"/><rect x="725.01" y="434.60" width="0.6" height="3.60"/><rect x="726.27" y="434.60" width="0.6" height="3.60"/></g><g fill="rgb(225,225,225)" opacity="0.87"><rect x="764.08" y="435.20" width="2.53" height="0.6"/><rect x="764.08" y="436.10" width="2.53" height="0.6"/><rect x="763.00" y="437.11" width="3.61" height="0.6"/><rect x="763.24" y="434.60" width="0.6" height="3.60"/><rect x="764.51" y="434.60" width="0.6" height="3.60"/></g><g fill="rgb(225,225,225)" opacity="0.87"><rect x="723.50" y="443.80" width="3.61" height="0.6"/><rect x="723.50" y="444.70" width="3.61" height="0.6"/><rect x="723.50" y="445.71" width="3.61" height="0.6"/><rect x="723.74" y="444.46" width="0.6" height="2.34"/></g><g fill="rgb(225,225,225)" opacity="0.87"><rect x="723.50" y="453.60" width="3.61" height="0.6"/><rect x="723.50" y="454.50" width="3.61" height="0.6"/><rect x="725.01" y="453.00" width="0.6" height="3.60"/></g><g fill="rgb(225,225,225)" opacity="0.87"><rect x="763.00" y="454.50" width="3.61" height="0.6"/><rect x="764.08" y="455.51" width="2.53" height="0.6"/><rect x="763.24" y="454.26" width="0.6" height="2.34"/><rect x="765.77" y="453.00" width="0.6" height="3.60"/></g><g fill="rgb(225,225,225)" opacity="0.80"><rect x="713.11" y="465.20" width="2.59" height="0.6"/><rect x="712.00" y="466.20" width="3.70" height="0.6"/><rect x="712.00" y="467.32" width="3.70" height="0.6"/><rect x="713.55" y="464.50" width="0.6" height="4.00"/><rect x="716.40" y="466.20" width="3.70" height="0.6"/><rect x="717.51" y="467.32" width="2.59" height="0.6"/><rect x="716.65" y="465.90" width="0.6" height="2.60"/><rect x="717.95" y="464.50" width="0.6" height="4.00"/><rect x="720.80" y="466.20" width="3.70" height="0.6"/><rect x="720.80" y="467.32" width="3.70" height="0.6"/><rect x="722.35" y="465.90" width="0.6" height="2.60"/><rect x="725.20" y="467.32" width="3.70" height="0.6"/><rect x="725.45" y="464.50" width="0.6" height="4.00"/><rect x="726.75" y="464.50" width="0.6" height="4.00"/><rect x="729.60" y="465.20" width="3.70" height="0.6"/><rect x="730.71" y="466.20" width="2.59" height="0.6"/><rect x="731.15" y="465.90" width="0.6" height="2.60"/><rect x="734.00" y="465.20" width="3.70" height="0.6"/><rect x="734.25" y="465.90" width="0.6" height="2.60"/><rect x="735.55" y="464.50" width="0.6" height="4.00"/><rect x="736.84" y="464.50" width="0.6" height="4.00"/><rect x="738.40" y="465.20" width="3.70" height="0.6"/><rect x="738.40" y="466.20" width="3.70" height="0.6"/><rect x="741.24" y="465.90" width="0.6" height="2.60"/></g><g fill="rgb(225,225,225)" opacity="1.00"><rect x="749.00" y="464.20" width="3.61" height="0.6"/><rect x="749.00" y="465.10" width="3.61" height="0.6"/><rect x="750.51" y="464.86" width="0.6" height="2.34"/></g><g fill="rgb(225,225,225)" opacity="0.80"><rect x="717.00" y="474.70" width="3.70" height="0.6"/><rect x="717.25" y="473.00" width="0.6" height="4.00"/><rect x="718.55" y="474.40" width="0.6" height="2.60"/><rect x="719.84" y="473.00" width="0.6" height="4.00"/><rect x="721.65" y="474.40" width="0.6" height="2.60"/><rect x="722.95" y="473.00" width="0.6" height="4.00"/><rect x="724.24" y="473.00" width="0.6" height="4.00"/><rect x="726.91" y="474.70" width="2.59" height="0.6"/><rect x="726.91" y="475.82" width="2.59" height="0.6"/><rect x="728.64" y="474.40" width="0.6" height="2.60"/><rect x="731.31" y="473.70" width="2.59" height="0.6"/><rect x="730.20" y="474.70" width="3.70" height="0.6"/><rect x="730.45" y="473.00" width="0.6" height="4.00"/><rect x="731.75" y="473.00" width="0.6" height="4.00"/><rect x="733.04" y="473.00" width="0.6" height="4.00"/><rect x="734.60" y="473.70" width="3.70" height="0.6"/><rect x="734.60" y="474.70" width="3.70" height="0.6"/><rect x="734.60" y="475.82" width="3.70" height="0.6"/><rect x="736.15" y="474.40" width="0.6" height="2.60"/><rect x="739.00" y="474.70" width="3.70" height="0.6"/><rect x="739.00" y="475.82" width="3.70" height="0.6"/><rect x="739.25" y="474.40" width="0.6" height="2.60"/></g><g fill="rgb(225,225,225)" opacity="1.00"><rect x="749.00" y="473.20" width="3.61" height="0.6"/><rect x="749.00" y="474.10" width="3.61" height="0.6"/><rect x="750.51" y="472.60" width="0.6" height="3.60"/></g><g fill="rgb(225,225,225)" opacity="0.80"><rect x="719.00" y="485.05" width="3.36" height="0.6"/><rect x="719.00" y="486.00" width="3.36" height="0.6"/><rect x="720.38" y="484.40" width="0.6" height="3.80"/><rect x="723.00" y="485.05" width="3.36" height="0.6"/><rect x="724.01" y="486.00" width="2.35" height="0.6"/><rect x="723.20" y="484.40" width="0.6" height="3.80"/><rect x="724.38" y="484.40" width="0.6" height="3.80"/></g><g fill="rgb(225,225,225)" opacity="0.87"><rect x="64.00" y="488.40" width="3.78" height="0.6"/><rect x="64.27" y="486.80" width="0.6" height="3.80"/><rect x="65.59" y="486.80" width="0.6" height="3.80"/><rect x="66.91" y="486.80" width="0.6" height="3.80"/><rect x="68.50" y="487.45" width="3.78" height="0.6"/><rect x="68.50" y="488.40" width="3.78" height="0.6"/><rect x="68.50" y="489.46" width="3.78" height="0.6"/><rect x="71.41" y="486.80" width="0.6" height="3.80"/></g></svg>
</body></html>
